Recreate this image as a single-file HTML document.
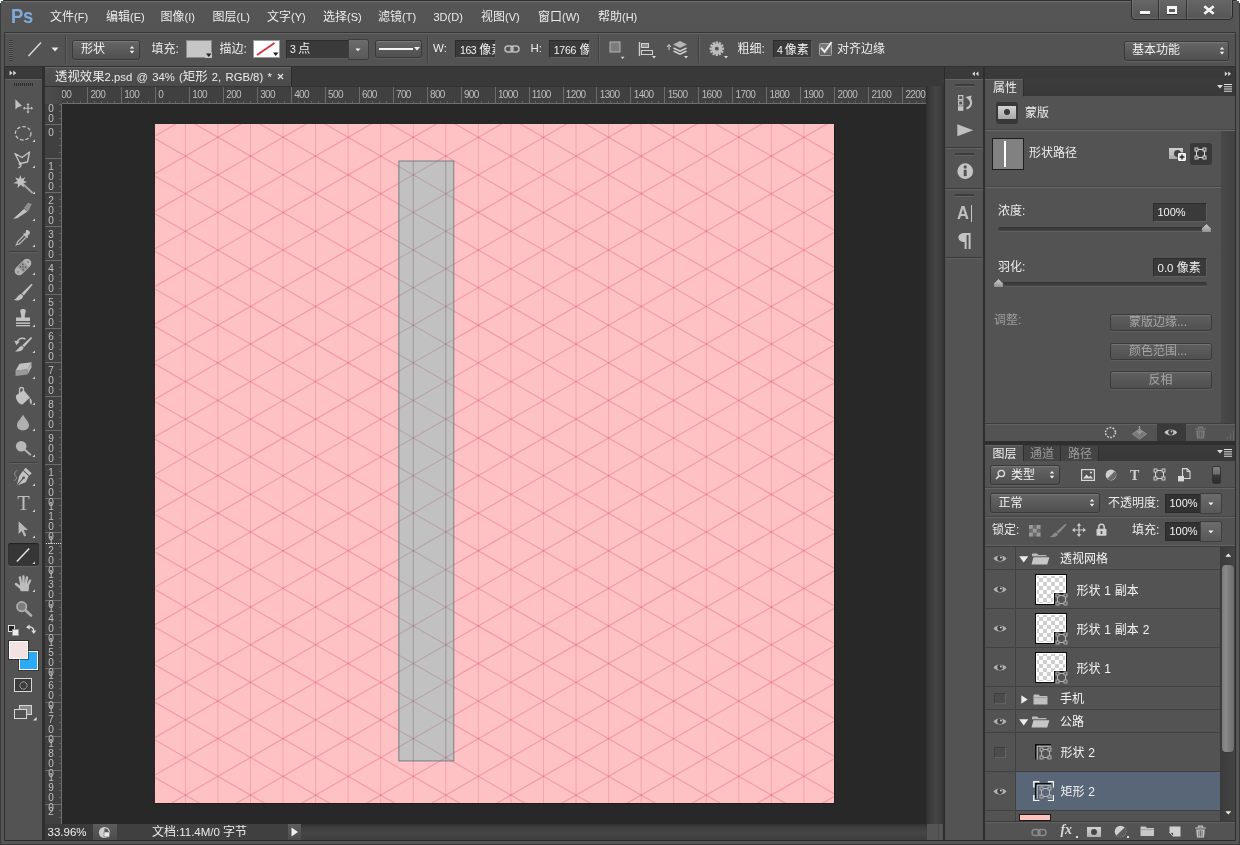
<!DOCTYPE html>
<html lang="zh-CN"><head><meta charset="utf-8"><title>Photoshop</title>
<style>
html,body{margin:0;padding:0}
body{width:1240px;height:845px;overflow:hidden;background:#535353;position:relative;font-family:"Liberation Sans","Noto Sans CJK SC",sans-serif;}
#app{position:absolute;left:0;top:0;width:1240px;height:845px;overflow:hidden;will-change:transform}
#app div,#app svg{position:absolute}
#app .t{display:flex;white-space:pre;align-items:flex-start}
#app .t b{position:relative;display:block;overflow:visible;color:inherit;font-weight:normal;flex:none;font-size:12px;font-family:"Liberation Sans","Noto Sans CJK SC",sans-serif}
#app .t span{position:relative;display:block;flex:none}
#app .l{white-space:pre}
.btn{border:1px solid #383838;border-radius:2.5px;background:linear-gradient(#666,#4f4f4f);box-sizing:border-box;box-shadow:inset 0 1px 0 rgba(255,255,255,.13),0 1px 0 rgba(255,255,255,.08)}
.fld{background:#3a3a3a;box-sizing:border-box;border:1px solid #2c2c2c;border-right-color:#5e5e5e;border-bottom-color:#5e5e5e}
</style></head>
<body>
<div id="app">
<div style="left:0px;top:0px;width:1240px;height:32px;background:linear-gradient(#5c5c5c 0px,#565656 3px,#535353 100%);"></div>
<div style="left:0px;top:0px;width:1240px;height:1px;background:#2f2f2f;"></div>
<div style="left:0px;top:1px;width:1240px;height:1px;background:#707070;"></div>
<div class="l" style="left:10.5px;top:3.5px;font-size:20.5px;line-height:22.5px;color:#7fa9da;font-weight:bold;letter-spacing:-0.3px;line-height:23px;transform:scaleX(.9);transform-origin:0 0">Ps</div>
<div class="t" style="left:50px;top:10.5px;height:12px;line-height:12px;font-size:11px;color:#ececec;fill:#ececec;"><b style="width:24px;height:12px;font-size:12px">文件</b><span style="top:0px">(F)</span></div>
<div class="t" style="left:106px;top:10.5px;height:12px;line-height:12px;font-size:11px;color:#ececec;fill:#ececec;"><b style="width:24px;height:12px;font-size:12px">编辑</b><span style="top:0px">(E)</span></div>
<div class="t" style="left:160.5px;top:10.5px;height:12px;line-height:12px;font-size:11px;color:#ececec;fill:#ececec;"><b style="width:24px;height:12px;font-size:12px">图像</b><span style="top:0px">(I)</span></div>
<div class="t" style="left:212.5px;top:10.5px;height:12px;line-height:12px;font-size:11px;color:#ececec;fill:#ececec;"><b style="width:24px;height:12px;font-size:12px">图层</b><span style="top:0px">(L)</span></div>
<div class="t" style="left:267px;top:10.5px;height:12px;line-height:12px;font-size:11px;color:#ececec;fill:#ececec;"><b style="width:24px;height:12px;font-size:12px">文字</b><span style="top:0px">(Y)</span></div>
<div class="t" style="left:323px;top:10.5px;height:12px;line-height:12px;font-size:11px;color:#ececec;fill:#ececec;"><b style="width:24px;height:12px;font-size:12px">选择</b><span style="top:0px">(S)</span></div>
<div class="t" style="left:378px;top:10.5px;height:12px;line-height:12px;font-size:11px;color:#ececec;fill:#ececec;"><b style="width:24px;height:12px;font-size:12px">滤镜</b><span style="top:0px">(T)</span></div>
<div class="t" style="left:433.5px;top:10.5px;height:12px;line-height:12px;font-size:11px;color:#ececec;fill:#ececec;"><span style="top:0px">3D(D)</span></div>
<div class="t" style="left:481px;top:10.5px;height:12px;line-height:12px;font-size:11px;color:#ececec;fill:#ececec;"><b style="width:24px;height:12px;font-size:12px">视图</b><span style="top:0px">(V)</span></div>
<div class="t" style="left:538px;top:10.5px;height:12px;line-height:12px;font-size:11px;color:#ececec;fill:#ececec;"><b style="width:24px;height:12px;font-size:12px">窗口</b><span style="top:0px">(W)</span></div>
<div class="t" style="left:598px;top:10.5px;height:12px;line-height:12px;font-size:11px;color:#ececec;fill:#ececec;"><b style="width:24px;height:12px;font-size:12px">帮助</b><span style="top:0px">(H)</span></div>
<div style="left:1130.5px;top:-3px;width:102px;height:22.8px;background:linear-gradient(#686868,#555);border:1px solid #2b2b2b;border-radius:0 0 4px 4px;box-sizing:border-box;box-shadow:inset 0 0 0 1px rgba(255,255,255,.10)"></div>
<div style="left:1158px;top:0px;width:1px;height:19px;background:#333;"></div>
<div style="left:1159px;top:0px;width:1px;height:19px;background:rgba(255,255,255,.10);"></div>
<div style="left:1185.5px;top:0px;width:1px;height:19px;background:#333;"></div>
<div style="left:1186.5px;top:0px;width:1px;height:19px;background:rgba(255,255,255,.10);"></div>
<div style="left:1140px;top:11px;width:10px;height:3px;background:#f4f4f4;box-shadow:0 1px 0 #333"></div>
<div style="left:1167px;top:6px;width:10px;height:8px;box-sizing:border-box;border:2px solid #f4f4f4;border-top-width:3px;box-shadow:0 1px 0 #333"></div><svg style="left:1202px;top:5px;" width="14" height="10" viewBox="0 0 14 10"><path d="M2.3 1.3 L11.7 8.7 M11.7 1.3 L2.3 8.7" stroke="#f4f4f4" stroke-width="2.7" fill="none"/></svg><div style="left:0px;top:32px;width:1240px;height:34px;background:#535353;"></div>
<div style="left:0px;top:32px;width:1240px;height:1px;background:#343434;"></div>
<div style="left:0px;top:33px;width:1240px;height:1px;background:#666;"></div>
<div style="left:0px;top:66px;width:1240px;height:1px;background:#303030;"></div>
<div style="left:4px;top:33px;width:1px;height:34px;background:#343434;"></div>
<div style="left:9px;top:40px;width:4px;height:21px;background:repeating-linear-gradient(#3a3a3a 0 1px,#626262 1px 2px);"></div><svg style="left:26px;top:40px;" width="18" height="18" viewBox="0 0 18 18"><path d="M2.5 16 L15 2.5" stroke="#dcdcdc" stroke-width="1.4" fill="none"/></svg><svg style="left:51px;top:47px;" width="8" height="5" viewBox="0 0 8 5"><path d="M0.5 0.5 H7.5 L4 4.5 Z" fill="#e8e8e8"/></svg><div style="left:65px;top:36px;width:1px;height:27px;background:#404040;"></div>
<div style="left:66px;top:36px;width:1px;height:27px;background:#606060;"></div>
<div class="btn" style="left:72px;top:39.5px;width:67.5px;height:20px;"></div>
<div class="t" style="left:81px;top:42.5px;height:12px;line-height:12px;font-size:11px;color:#f0f0f0;fill:#f0f0f0;"><b style="width:24px;height:12px;font-size:12px">形状</b></div><svg style="left:129.2px;top:45.3px;" width="6" height="9.4" viewBox="0 0 8 12"><path d="M1 4.5 L4 1 L7 4.5 Z M1 7.5 L4 11 L7 7.5 Z" fill="#f0f0f0"/></svg><div class="t" style="left:151.5px;top:42.5px;height:12px;line-height:12px;font-size:12px;color:#ececec;fill:#ececec;"><b style="width:30px;height:12px;font-size:12px">填充:</b></div>
<div style="left:186px;top:40px;width:26px;height:18px;background:#c6c6c6;box-sizing:border-box;border:1px solid #8a8a8a"></div><svg style="left:205px;top:52px;" width="7" height="6" viewBox="0 0 7 6"><rect width="7" height="6" fill="#c6c6c6"/><path d="M1 1.5 H6.5 L3.75 5 Z" fill="#222"/></svg><div class="t" style="left:219.5px;top:42.5px;height:12px;line-height:12px;font-size:12px;color:#ececec;fill:#ececec;"><b style="width:30px;height:12px;font-size:12px">描边:</b></div>
<div style="left:253px;top:40px;width:27px;height:18px;background:#fff;box-sizing:border-box;border:1px solid #999"></div><svg style="left:254px;top:41px;" width="25" height="16" viewBox="0 0 25 16"><path d="M3 14 L20.5 2" stroke="#d6343f" stroke-width="1.9"/><path d="M19 11.5 H24.5 L21.75 15 Z" fill="#222"/></svg><div class="fld" style="left:286px;top:39.5px;width:63px;height:19px;"></div>
<div class="t" style="left:290px;top:42.5px;height:12px;line-height:12px;font-size:10.5px;color:#f4f4f4;fill:#f4f4f4;word-spacing:-.6px"><span style="top:0px">3 </span><b style="width:12px;height:12px;font-size:12px">点</b></div>
<div style="left:348.5px;top:40px;width:19px;height:18.5px;background:linear-gradient(#6c6c6c,#585858);border-radius:0 2px 2px 0;box-shadow:0 0 0 1px #3e3e3e"></div><svg style="left:355px;top:47.5px;" width="5.8" height="3.8" viewBox="0 0 8 5"><path d="M0.5 0.5 H7.5 L4 4.5 Z" fill="#f4f4f4"/></svg><div class="btn" style="left:375px;top:39.5px;width:46.5px;height:18.5px;"></div>
<div style="left:379px;top:47.5px;width:34px;height:2px;background:#f4f4f4;"></div><svg style="left:413.5px;top:47px;" width="6" height="4" viewBox="0 0 6 4"><path d="M0 0 H6 L3 3.5 Z" fill="#eee"/></svg><div style="left:427px;top:36px;width:1px;height:27px;background:#404040;"></div>
<div style="left:428px;top:36px;width:1px;height:27px;background:#606060;"></div>
<div class="l" style="left:433px;top:42px;font-size:11.5px;line-height:13.5px;color:#ececec;">W:</div>
<div class="fld" style="left:455px;top:40px;width:40.5px;height:18px;overflow:hidden"><div class="t" style="left:4px;top:2.5px;height:12px;line-height:12px;font-size:10.5px;color:#f4f4f4;fill:#f4f4f4;letter-spacing:-.45px;word-spacing:.6px"><span style="top:0px">163 </span><b style="width:24px;height:12px;font-size:12px;letter-spacing:0">像素</b></div></div><svg style="left:504px;top:44px;" width="16" height="10" viewBox="0 0 16 10"><rect x="1" y="2" width="8" height="6" rx="3" fill="none" stroke="#bdbdbd" stroke-width="1.5"/><rect x="7" y="2" width="8" height="6" rx="3" fill="none" stroke="#bdbdbd" stroke-width="1.5"/></svg><div class="l" style="left:530.5px;top:42px;font-size:11.5px;line-height:13.5px;color:#ececec;">H:</div>
<div class="fld" style="left:549px;top:40px;width:40.5px;height:18px;overflow:hidden"><div class="t" style="left:3.7px;top:2.5px;height:12px;line-height:12px;font-size:10.5px;color:#f4f4f4;fill:#f4f4f4;letter-spacing:-.2px;word-spacing:.6px"><span style="top:0px">1766 </span><b style="width:24px;height:12px;font-size:12px;letter-spacing:0">像素</b></div></div>
<div style="left:598px;top:36px;width:1px;height:27px;background:#404040;"></div>
<div style="left:599px;top:36px;width:1px;height:27px;background:#606060;"></div><svg style="left:608px;top:41px;" width="18" height="19" viewBox="0 0 18 19"><rect x="2" y="1" width="10" height="10" fill="#7c7c7c" stroke="#b4b4b4"/><path d="M12.8 15.8 H16.4 L14.6 18Z" fill="#ddd"/></svg><svg style="left:638px;top:41px;" width="20" height="19" viewBox="0 0 20 19"><path d="M1.5 1 V15" stroke="#d0d0d0" stroke-width="1.4"/><rect x="3.5" y="2.5" width="7" height="4" fill="#8e8e8e" stroke="#d0d0d0"/><rect x="3.5" y="9.5" width="11" height="4" fill="none" stroke="#d0d0d0"/><path d="M14 15 H18 L16 17.5Z" fill="#ddd"/></svg><svg style="left:666px;top:40px;" width="24" height="20" viewBox="0 0 24 20"><path d="M3 10 V5 M1 7 L3 4.5 L5 7" stroke="#d0d0d0" fill="none"/><path d="M14 1 L21 4.5 L14 8 L7 4.5Z" fill="#b5b5b5"/><path d="M7.5 8 L14 11.2 L20.5 8 M7.5 11 L14 14.2 L20.5 11" stroke="#cfcfcf" stroke-width="1.6" fill="none"/><path d="M18 16 H22 L20 18.5Z" fill="#ddd"/></svg><div style="left:698px;top:36px;width:1px;height:27px;background:#404040;"></div>
<div style="left:699px;top:36px;width:1px;height:27px;background:#606060;"></div><svg style="left:708px;top:40px;" width="22" height="20" viewBox="0 0 22 20"><g transform="translate(8.8,8.7)" fill="#bcbcbc"><rect x="-1.15" y="-7.3" width="2.3" height="3.4" transform="rotate(0)"/><rect x="-1.15" y="-7.3" width="2.3" height="3.4" transform="rotate(30)"/><rect x="-1.15" y="-7.3" width="2.3" height="3.4" transform="rotate(60)"/><rect x="-1.15" y="-7.3" width="2.3" height="3.4" transform="rotate(90)"/><rect x="-1.15" y="-7.3" width="2.3" height="3.4" transform="rotate(120)"/><rect x="-1.15" y="-7.3" width="2.3" height="3.4" transform="rotate(150)"/><rect x="-1.15" y="-7.3" width="2.3" height="3.4" transform="rotate(180)"/><rect x="-1.15" y="-7.3" width="2.3" height="3.4" transform="rotate(210)"/><rect x="-1.15" y="-7.3" width="2.3" height="3.4" transform="rotate(240)"/><rect x="-1.15" y="-7.3" width="2.3" height="3.4" transform="rotate(270)"/><rect x="-1.15" y="-7.3" width="2.3" height="3.4" transform="rotate(300)"/><rect x="-1.15" y="-7.3" width="2.3" height="3.4" transform="rotate(330)"/><circle r="5.2"/><circle r="1.9" fill="#535353"/></g><path d="M16 16 H20 L18 18.5Z" fill="#ddd"/></svg><div class="t" style="left:737.5px;top:42.5px;height:12px;line-height:12px;font-size:12px;color:#ececec;fill:#ececec;"><b style="width:30px;height:12px;font-size:12px">粗细:</b></div>
<div class="fld" style="left:772.5px;top:40px;width:39.5px;height:18px;"><div class="t" style="left:3.5px;top:2.5px;height:12px;line-height:12px;font-size:10.5px;color:#f4f4f4;fill:#f4f4f4;word-spacing:-.9px"><span style="top:0px">4 </span><b style="width:24px;height:12px;font-size:12px">像素</b></div></div>
<div style="left:818.5px;top:42.5px;width:13px;height:13px;background:linear-gradient(#7c7c7c,#626262);box-sizing:border-box;border:1px solid #a6a6a6;border-radius:1.5px"></div><svg style="left:818px;top:39px;" width="16" height="16" viewBox="0 0 16 16"><path d="M3 8.6 L6.6 12.8 L13.6 3.2" stroke="#ececec" stroke-width="2" fill="none"/></svg><div class="t" style="left:837px;top:42.5px;height:12px;line-height:12px;font-size:11px;color:#ececec;fill:#ececec;"><b style="width:48px;height:12px;font-size:12px">对齐边缘</b></div>
<div class="btn" style="left:1123.5px;top:40.5px;width:105px;height:20px;"></div>
<div class="t" style="left:1132px;top:44px;height:12px;line-height:12px;font-size:11px;color:#f0f0f0;fill:#f0f0f0;"><b style="width:48px;height:12px;font-size:12px">基本功能</b></div><svg style="left:1218.7px;top:46.3px;" width="6" height="9.4" viewBox="0 0 8 12"><path d="M1 4.5 L4 1 L7 4.5 Z M1 7.5 L4 11 L7 7.5 Z" fill="#f0f0f0"/></svg><div style="left:4px;top:67px;width:1px;height:773px;background:#2e2e2e;"></div>
<div style="left:5px;top:67px;width:37px;height:12px;background:#3a3a3a;"></div>
<div style="left:5px;top:79px;width:37px;height:761px;background:#535353;"></div>
<div style="left:5px;top:79px;width:37px;height:1px;background:#636363;"></div>
<div style="left:42px;top:67px;width:3px;height:773px;background:#2f2f2f;"></div><svg style="left:8.5px;top:70px;" width="8" height="6" viewBox="0 0 9 7"><path d="M0.5 0.5 L4 3.5 L0.5 6.5Z M4.8 0.5 L8.3 3.5 L4.8 6.5Z" fill="#d8d8d8"/></svg><div style="left:14px;top:83px;width:19px;height:3px;background:repeating-linear-gradient(90deg,#2e2e2e 0 1px,#535353 1px 2px);"></div><svg style="left:12.5px;top:97px;overflow:visible" width="20" height="20" viewBox="0 0 20 20"><path d="M2.4 2.2 V12.6 L5.2 10 L9 9Z" fill="#c2c2c2"/><g stroke="#c2c2c2" stroke-width="1.1" fill="none"><path d="M15 7.5 V15 M11.2 11.2 H18.8"/></g><path d="M15 6 L13.4 8.1 H16.6Z M15 16.6 L13.4 14.5 H16.6Z M9.8 11.2 L11.9 9.6 V12.8Z M20.2 11.2 L18.1 9.6 V12.8Z" fill="#c2c2c2"/></svg><svg style="left:12.5px;top:124px;overflow:visible" width="20" height="20" viewBox="0 0 20 20"><ellipse cx="10.2" cy="9.3" rx="7.8" ry="6.7" fill="none" stroke="#c2c2c2" stroke-width="1.3" stroke-dasharray="3.6 1.9"/></svg><svg style="left:32px;top:139px;" width="3.4" height="3.4" viewBox="0 0 3.4 3.4"><path d="M3.4 0 V3.4 H0Z" fill="#d4d4d4"/></svg><svg style="left:12.5px;top:149.5px;overflow:visible" width="20" height="20" viewBox="0 0 20 20"><path d="M2 3.5 L9 7.5 L16.5 2 L14.5 12 L7 13.5 Z" fill="none" stroke="#c2c2c2" stroke-width="1.4" stroke-linejoin="round"/><path d="M7 13.5 C9 15 8 17 5 18" fill="none" stroke="#c2c2c2" stroke-width="1.3"/><circle cx="7.2" cy="13.8" r="1.6" fill="#c2c2c2"/></svg><svg style="left:32px;top:164.5px;" width="3.4" height="3.4" viewBox="0 0 3.4 3.4"><path d="M3.4 0 V3.4 H0Z" fill="#d4d4d4"/></svg><svg style="left:12.5px;top:176px;overflow:visible" width="20" height="20" viewBox="0 0 20 20"><path d="M10.5 8.5 L19 16.5" stroke="#a4a4a4" stroke-width="2" stroke-linecap="round"/><path d="M7.5 -1 L8.6 3 L12.5 1 L10.4 4.8 L14 6 L10.2 7.4 L11 11.5 L7.6 8.8 L4.6 12 L5 7.8 L0.5 7.2 L4.4 5 L2.2 1.4 L6 2.8Z" fill="#c2c2c2"/></svg><svg style="left:32px;top:191px;" width="3.4" height="3.4" viewBox="0 0 3.4 3.4"><path d="M3.4 0 V3.4 H0Z" fill="#d4d4d4"/></svg><svg style="left:12.5px;top:202.5px;overflow:visible" width="20" height="20" viewBox="0 0 20 20"><g transform="translate(-0.8,-1.3)"><path d="M1 17 L12 7 L15 10 L5 16.5 Z" fill="#c2c2c2"/><path d="M12.3 6.3 L16 1.5 L19 2.5 L15.6 9.5Z" fill="#8c8c8c" stroke="#aaa" stroke-width=".6"/></g></svg><svg style="left:32px;top:217.5px;" width="3.4" height="3.4" viewBox="0 0 3.4 3.4"><path d="M3.4 0 V3.4 H0Z" fill="#d4d4d4"/></svg><svg style="left:12.5px;top:228.5px;overflow:visible" width="20" height="20" viewBox="0 0 20 20"><g transform="translate(1.2,0.2) scale(.9)"><path d="M13.2 1.2 C15 -0.3 18.8 3 17 5.2 L14.6 7.6 L15.6 8.6 L14.2 10 L9.8 5.6 L11.2 4.2 L12.2 5.2Z" fill="#c2c2c2"/><path d="M10.6 7.2 L3.6 14.2 L3 16.8 L1.6 18.2 M12.8 9.4 L5.8 16.4 L3.2 17" fill="none" stroke="#c2c2c2" stroke-width="1.3"/></g></svg><svg style="left:32px;top:243.5px;" width="3.4" height="3.4" viewBox="0 0 3.4 3.4"><path d="M3.4 0 V3.4 H0Z" fill="#d4d4d4"/></svg><svg style="left:12.5px;top:256.5px;overflow:visible" width="20" height="20" viewBox="0 0 20 20"><g transform="rotate(-45 10 10)"><rect x="0" y="5.6" width="20" height="8.8" rx="4.4" fill="#b2b2b2"/><rect x="6.3" y="5.6" width="7.4" height="8.8" fill="#989898"/><g fill="#5a5a5a"><circle cx="8.2" cy="8" r=".8"/><circle cx="11.8" cy="8" r=".8"/><circle cx="8.2" cy="12" r=".8"/><circle cx="11.8" cy="12" r=".8"/><circle cx="10" cy="10" r=".8"/><circle cx="3" cy="10" r=".7"/><circle cx="17" cy="10" r=".7"/></g></g></svg><svg style="left:32px;top:271.5px;" width="3.4" height="3.4" viewBox="0 0 3.4 3.4"><path d="M3.4 0 V3.4 H0Z" fill="#d4d4d4"/></svg><svg style="left:12.5px;top:282.5px;overflow:visible" width="20" height="20" viewBox="0 0 20 20"><path d="M18.5 0.8 L19.6 1.8 L10.8 12.4 L8.6 10.4Z" fill="#c2c2c2"/><path d="M8 11 L10.2 13 C9.5 17 4.5 18.3 0.8 17 C3.8 16 4.6 12 8 11Z" fill="#c2c2c2"/></svg><svg style="left:32px;top:297.5px;" width="3.4" height="3.4" viewBox="0 0 3.4 3.4"><path d="M3.4 0 V3.4 H0Z" fill="#d4d4d4"/></svg><svg style="left:12.5px;top:309px;overflow:visible" width="20" height="20" viewBox="0 0 20 20"><path d="M7.2 1.5 C7.2 -0.5 12.8 -0.5 12.8 1.5 C12.8 4 11.5 5.5 11.8 8.6 H17 V12 H3 V8.6 H8.2 C8.5 5.5 7.2 4 7.2 1.5Z" fill="#c2c2c2"/><rect x="3" y="13.4" width="14" height="1.5" fill="#c2c2c2"/><rect x="3" y="16" width="14" height="1.3" fill="#c2c2c2"/></svg><svg style="left:32px;top:324px;" width="3.4" height="3.4" viewBox="0 0 3.4 3.4"><path d="M3.4 0 V3.4 H0Z" fill="#d4d4d4"/></svg><svg style="left:12.5px;top:334.5px;overflow:visible" width="20" height="20" viewBox="0 0 20 20"><path d="M18 2 L19.2 3 L11.3 12 L9.3 10.2Z" fill="#c2c2c2"/><path d="M8.7 10.8 L10.7 12.6 C10 16 5.5 17.3 2 16.2 C5 15.2 5.6 11.8 8.7 10.8Z" fill="#c2c2c2"/><path d="M4 7.5 C5 3.5 9.5 2 12.5 4.2" fill="none" stroke="#c2c2c2" stroke-width="1.5"/><path d="M1.3 5.8 L6.6 6.6 L3.5 10.2Z" fill="#c2c2c2"/></svg><svg style="left:32px;top:349.5px;" width="3.4" height="3.4" viewBox="0 0 3.4 3.4"><path d="M3.4 0 V3.4 H0Z" fill="#d4d4d4"/></svg><svg style="left:12.5px;top:360.5px;overflow:visible" width="20" height="20" viewBox="0 0 20 20"><g transform="translate(0,-1.2)"><path d="M6.5 4 L18.5 2.5 L14.5 9.5 L2.5 11Z" fill="#c2c2c2"/><path d="M2.5 11 L14.5 9.5 V14.8 L2.5 16.3Z" fill="#9a9a9a"/><path d="M14.5 9.5 L18.5 2.5 V7.8 L14.5 14.8Z" fill="#b4b4b4"/></g></svg><svg style="left:32px;top:375.5px;" width="3.4" height="3.4" viewBox="0 0 3.4 3.4"><path d="M3.4 0 V3.4 H0Z" fill="#d4d4d4"/></svg><svg style="left:12.5px;top:386.5px;overflow:visible" width="20" height="20" viewBox="0 0 20 20"><path d="M3 8.5 L10.5 3 L17 10.5 L9.5 17.5 C7 18.5 2 12.5 3 8.5Z" fill="#c2c2c2"/><path d="M6.5 7 V2.6 C6.5 -0.2 10.5 -0.2 10.5 2.6 V6.5" fill="none" stroke="#c2c2c2" stroke-width="1.3"/><path d="M16.8 10.8 C19.3 12.8 19.3 15.6 18.2 17.8 C16.6 16 16.4 13.4 16.8 10.8Z" fill="#c2c2c2"/></svg><svg style="left:32px;top:401.5px;" width="3.4" height="3.4" viewBox="0 0 3.4 3.4"><path d="M3.4 0 V3.4 H0Z" fill="#d4d4d4"/></svg><svg style="left:12.5px;top:412.5px;overflow:visible" width="20" height="20" viewBox="0 0 20 20"><path d="M10 1.6 C11.8 5.6 16 8.6 16 12.2 C16 15.3 13.4 17.4 10 17.4 C6.6 17.4 4 15.3 4 12.2 C4 8.6 8.2 5.6 10 1.6Z" fill="#b0b0b0"/></svg><svg style="left:32px;top:427.5px;" width="3.4" height="3.4" viewBox="0 0 3.4 3.4"><path d="M3.4 0 V3.4 H0Z" fill="#d4d4d4"/></svg><svg style="left:12.5px;top:438.5px;overflow:visible" width="20" height="20" viewBox="0 0 20 20"><circle cx="8.2" cy="7.3" r="5.3" fill="#b8b8b8"/><path d="M11.5 10.5 L17.3 15.6" stroke="#b8b8b8" stroke-width="1.9" stroke-linecap="round"/></svg><svg style="left:32px;top:453.5px;" width="3.4" height="3.4" viewBox="0 0 3.4 3.4"><path d="M3.4 0 V3.4 H0Z" fill="#d4d4d4"/></svg><svg style="left:12.5px;top:467.5px;overflow:visible" width="20" height="20" viewBox="0 0 20 20"><g transform="translate(-0.3,-1)"><path d="M13 0.8 L19 6.2 L16.8 8.4 L10.8 3Z" fill="#c2c2c2"/><path d="M10.2 3.8 L16 9 L13 15.2 L4 18.8 L6.5 9.2Z" fill="#c2c2c2"/><path d="M4.2 18.6 L10.4 11.4" stroke="#535353" stroke-width="1.1"/><circle cx="10.9" cy="10.8" r="1.4" fill="#535353"/><path d="M4.5 3.5 C1.5 4.5 1.5 8 3.2 9.5 C4.8 11 3.2 13.6 1 13.2" fill="none" stroke="#9a9a9a" stroke-width="1"/></g></svg><svg style="left:32px;top:482.5px;" width="3.4" height="3.4" viewBox="0 0 3.4 3.4"><path d="M3.4 0 V3.4 H0Z" fill="#d4d4d4"/></svg><svg style="left:12.5px;top:493.5px;overflow:visible" width="20" height="20" viewBox="0 0 20 20"><text x="10.4" y="16.4" text-anchor="middle" font-family="Liberation Serif,serif" font-size="20.5" fill="#bcbcbc">T</text></svg><svg style="left:32px;top:508.5px;" width="3.4" height="3.4" viewBox="0 0 3.4 3.4"><path d="M3.4 0 V3.4 H0Z" fill="#d4d4d4"/></svg><svg style="left:12.5px;top:519.5px;overflow:visible" width="20" height="20" viewBox="0 0 20 20"><path d="M5.6 1.2 V14 L8.6 11 L11.2 16.5 L13.3 15.5 L10.7 10.1 L15 9.9Z" fill="#b8b8b8"/></svg><svg style="left:32px;top:534.5px;" width="3.4" height="3.4" viewBox="0 0 3.4 3.4"><path d="M3.4 0 V3.4 H0Z" fill="#d4d4d4"/></svg><div style="left:8px;top:542.5px;width:31px;height:23px;background:#363636;border-radius:3px;box-shadow:inset 0 1px 1px #222, 0 1px 0 #636363"></div><svg style="left:12.5px;top:545.5px;overflow:visible" width="20" height="20" viewBox="0 0 20 20"><path d="M3.9 15.6 L16.2 2.6" stroke="#e4e4e4" stroke-width="1.5"/></svg><svg style="left:32px;top:560.5px;" width="3.4" height="3.4" viewBox="0 0 3.4 3.4"><path d="M3.4 0 V3.4 H0Z" fill="#d4d4d4"/></svg><svg style="left:12.5px;top:574px;overflow:visible" width="20" height="20" viewBox="0 0 20 20"><g stroke="#bdbdbd" stroke-linecap="round" fill="none"><path d="M8.3 10 L6.9 3.4 M10.6 10 L10.4 2.5 M12.9 10 L14 3.4" stroke-width="2.4"/><path d="M15 11 L17.1 6.5" stroke-width="2.2"/><path d="M8.2 14.2 L3 10" stroke-width="2.5"/></g><path d="M7 9.4 H16.2 L15.6 17.2 H7.6 L6.6 13Z" fill="#bdbdbd"/></svg><svg style="left:32px;top:589px;" width="3.4" height="3.4" viewBox="0 0 3.4 3.4"><path d="M3.4 0 V3.4 H0Z" fill="#d4d4d4"/></svg><svg style="left:12.5px;top:600px;overflow:visible" width="20" height="20" viewBox="0 0 20 20"><circle cx="8.7" cy="6.6" r="4.7" fill="#7c7c7c" stroke="#b0b0b0" stroke-width="1.7"/><path d="M12.7 10.5 L18 15.5" stroke="#b0b0b0" stroke-width="2.6" stroke-linecap="round"/></svg><div style="left:9px;top:250.5px;width:29px;height:1px;background:#3e3e3e;"></div>
<div style="left:9px;top:251.5px;width:29px;height:1px;background:#606060;"></div>
<div style="left:9px;top:462px;width:29px;height:1px;background:#3e3e3e;"></div>
<div style="left:9px;top:463px;width:29px;height:1px;background:#606060;"></div>
<div style="left:8px;top:625px;width:7px;height:7px;background:#222;border:1px solid #ddd;box-sizing:border-box"></div>
<div style="left:11.5px;top:628.5px;width:7px;height:7px;background:#eee;border:1px solid #999;box-sizing:border-box"></div><svg style="left:25px;top:623px;" width="12" height="12" viewBox="0 0 12 12"><path d="M3 4.5 C6 3 9 5 8.8 8.2" fill="none" stroke="#ddd" stroke-width="1.3"/><path d="M1 4.2 L4.6 1.6 L4.8 6.4Z M8.8 11 L6.2 7.6 L11.2 7.4Z" fill="#ddd"/></svg><div style="left:19px;top:651px;width:18.5px;height:18.5px;background:#2baaf7;border:1px solid #fff;box-sizing:border-box;box-shadow:0 0 0 1px rgba(0,0,0,.3)"></div>
<div style="left:8.5px;top:640.5px;width:19.5px;height:18.5px;background:#f3e2e2;border:1px solid #fff;box-sizing:border-box;box-shadow:0 0 0 1px rgba(0,0,0,.4)"></div>
<div style="left:14px;top:678px;width:17.5px;height:13.5px;background:#3c3c3c;border:1px solid #d8d8d8;box-sizing:border-box"></div><svg style="left:17.5px;top:679.5px;" width="11" height="11" viewBox="0 0 11 11"><circle cx="5.5" cy="5.5" r="3.6" fill="none" stroke="#ddd" stroke-width="1" stroke-dasharray="1.2 1"/></svg><div style="left:19px;top:705px;width:12.5px;height:10px;background:#8a8a8a;border:1px solid #d8d8d8;box-sizing:border-box"></div>
<div style="left:14px;top:709px;width:12.5px;height:10px;background:#535353;border:1px solid #d8d8d8;box-sizing:border-box"></div><svg style="left:32.5px;top:717px;" width="4" height="4" viewBox="0 0 4 4"><path d="M3.6 0 V3.6 H0Z" fill="#e0e0e0"/></svg><div style="left:45px;top:67px;width:899px;height:19px;background:#393939;"></div>
<div style="left:45px;top:67px;width:245.5px;height:19.5px;background:linear-gradient(#525252,#4a4a4a);box-shadow:inset 0 1px 0 #666, 1px 0 0 #2c2c2c"></div>
<div class="t" style="left:55px;top:70.5px;height:12.4px;line-height:12.4px;font-size:11.3px;color:#ececec;fill:#ececec;word-spacing:1.1px"><b style="width:49.6px;height:12.4px;font-size:12.4px">透视效果</b><span style="top:0.5px">2.psd @ 34% (</span><b style="width:24.8px;height:12.4px;font-size:12.4px">矩形</b><span style="top:0.5px"> 2, RGB/8) *</span></div><svg style="left:277px;top:73px;" width="7" height="7" viewBox="0 0 7 7"><path d="M1 1 L6 6 M6 1 L1 6" stroke="#e4e4e4" stroke-width="1.2"/></svg><div style="left:45px;top:86px;width:881px;height:18px;background:#404040;"></div>
<div style="left:45px;top:86px;width:881px;height:1px;background:#343434;"></div>
<div style="left:45px;top:104px;width:17px;height:720px;background:#404040;"></div>
<div style="left:62px;top:104px;width:864px;height:720px;background:#282828;"></div><svg style="left:0;top:0" width="1240" height="845"><path d="M67.5 101 V104" stroke="#606060" stroke-width="1"/><path d="M73.5 101 V104" stroke="#606060" stroke-width="1"/><path d="M80.5 101 V104" stroke="#606060" stroke-width="1"/><path d="M87.5 87 V104" stroke="#6c6c6c" stroke-width="1"/><path d="M94.5 101 V104" stroke="#606060" stroke-width="1"/><path d="M101.5 101 V104" stroke="#606060" stroke-width="1"/><path d="M107.5 101 V104" stroke="#606060" stroke-width="1"/><path d="M114.5 101 V104" stroke="#606060" stroke-width="1"/><path d="M121.5 87 V104" stroke="#6c6c6c" stroke-width="1"/><path d="M128.5 101 V104" stroke="#606060" stroke-width="1"/><path d="M135.5 101 V104" stroke="#606060" stroke-width="1"/><path d="M141.5 101 V104" stroke="#606060" stroke-width="1"/><path d="M148.5 101 V104" stroke="#606060" stroke-width="1"/><path d="M155.5 87 V104" stroke="#6c6c6c" stroke-width="1"/><path d="M162.5 101 V104" stroke="#606060" stroke-width="1"/><path d="M169.5 101 V104" stroke="#606060" stroke-width="1"/><path d="M175.5 101 V104" stroke="#606060" stroke-width="1"/><path d="M182.5 101 V104" stroke="#606060" stroke-width="1"/><path d="M189.5 87 V104" stroke="#6c6c6c" stroke-width="1"/><path d="M196.5 101 V104" stroke="#606060" stroke-width="1"/><path d="M203.5 101 V104" stroke="#606060" stroke-width="1"/><path d="M209.5 101 V104" stroke="#606060" stroke-width="1"/><path d="M216.5 101 V104" stroke="#606060" stroke-width="1"/><path d="M223.5 87 V104" stroke="#6c6c6c" stroke-width="1"/><path d="M230.5 101 V104" stroke="#606060" stroke-width="1"/><path d="M237.5 101 V104" stroke="#606060" stroke-width="1"/><path d="M243.5 101 V104" stroke="#606060" stroke-width="1"/><path d="M250.5 101 V104" stroke="#606060" stroke-width="1"/><path d="M257.5 87 V104" stroke="#6c6c6c" stroke-width="1"/><path d="M264.5 101 V104" stroke="#606060" stroke-width="1"/><path d="M270.5 101 V104" stroke="#606060" stroke-width="1"/><path d="M277.5 101 V104" stroke="#606060" stroke-width="1"/><path d="M284.5 101 V104" stroke="#606060" stroke-width="1"/><path d="M291.5 87 V104" stroke="#6c6c6c" stroke-width="1"/><path d="M298.5 101 V104" stroke="#606060" stroke-width="1"/><path d="M304.5 101 V104" stroke="#606060" stroke-width="1"/><path d="M311.5 101 V104" stroke="#606060" stroke-width="1"/><path d="M318.5 101 V104" stroke="#606060" stroke-width="1"/><path d="M325.5 87 V104" stroke="#6c6c6c" stroke-width="1"/><path d="M332.5 101 V104" stroke="#606060" stroke-width="1"/><path d="M338.5 101 V104" stroke="#606060" stroke-width="1"/><path d="M345.5 101 V104" stroke="#606060" stroke-width="1"/><path d="M352.5 101 V104" stroke="#606060" stroke-width="1"/><path d="M359.5 87 V104" stroke="#6c6c6c" stroke-width="1"/><path d="M366.5 101 V104" stroke="#606060" stroke-width="1"/><path d="M372.5 101 V104" stroke="#606060" stroke-width="1"/><path d="M379.5 101 V104" stroke="#606060" stroke-width="1"/><path d="M386.5 101 V104" stroke="#606060" stroke-width="1"/><path d="M393.5 87 V104" stroke="#6c6c6c" stroke-width="1"/><path d="M400.5 101 V104" stroke="#606060" stroke-width="1"/><path d="M406.5 101 V104" stroke="#606060" stroke-width="1"/><path d="M413.5 101 V104" stroke="#606060" stroke-width="1"/><path d="M420.5 101 V104" stroke="#606060" stroke-width="1"/><path d="M427.5 87 V104" stroke="#6c6c6c" stroke-width="1"/><path d="M433.5 101 V104" stroke="#606060" stroke-width="1"/><path d="M440.5 101 V104" stroke="#606060" stroke-width="1"/><path d="M447.5 101 V104" stroke="#606060" stroke-width="1"/><path d="M454.5 101 V104" stroke="#606060" stroke-width="1"/><path d="M461.5 87 V104" stroke="#6c6c6c" stroke-width="1"/><path d="M467.5 101 V104" stroke="#606060" stroke-width="1"/><path d="M474.5 101 V104" stroke="#606060" stroke-width="1"/><path d="M481.5 101 V104" stroke="#606060" stroke-width="1"/><path d="M488.5 101 V104" stroke="#606060" stroke-width="1"/><path d="M495.5 87 V104" stroke="#6c6c6c" stroke-width="1"/><path d="M501.5 101 V104" stroke="#606060" stroke-width="1"/><path d="M508.5 101 V104" stroke="#606060" stroke-width="1"/><path d="M515.5 101 V104" stroke="#606060" stroke-width="1"/><path d="M522.5 101 V104" stroke="#606060" stroke-width="1"/><path d="M529.5 87 V104" stroke="#6c6c6c" stroke-width="1"/><path d="M535.5 101 V104" stroke="#606060" stroke-width="1"/><path d="M542.5 101 V104" stroke="#606060" stroke-width="1"/><path d="M549.5 101 V104" stroke="#606060" stroke-width="1"/><path d="M556.5 101 V104" stroke="#606060" stroke-width="1"/><path d="M563.5 87 V104" stroke="#6c6c6c" stroke-width="1"/><path d="M569.5 101 V104" stroke="#606060" stroke-width="1"/><path d="M576.5 101 V104" stroke="#606060" stroke-width="1"/><path d="M583.5 101 V104" stroke="#606060" stroke-width="1"/><path d="M590.5 101 V104" stroke="#606060" stroke-width="1"/><path d="M596.5 87 V104" stroke="#6c6c6c" stroke-width="1"/><path d="M603.5 101 V104" stroke="#606060" stroke-width="1"/><path d="M610.5 101 V104" stroke="#606060" stroke-width="1"/><path d="M617.5 101 V104" stroke="#606060" stroke-width="1"/><path d="M624.5 101 V104" stroke="#606060" stroke-width="1"/><path d="M630.5 87 V104" stroke="#6c6c6c" stroke-width="1"/><path d="M637.5 101 V104" stroke="#606060" stroke-width="1"/><path d="M644.5 101 V104" stroke="#606060" stroke-width="1"/><path d="M651.5 101 V104" stroke="#606060" stroke-width="1"/><path d="M658.5 101 V104" stroke="#606060" stroke-width="1"/><path d="M664.5 87 V104" stroke="#6c6c6c" stroke-width="1"/><path d="M671.5 101 V104" stroke="#606060" stroke-width="1"/><path d="M678.5 101 V104" stroke="#606060" stroke-width="1"/><path d="M685.5 101 V104" stroke="#606060" stroke-width="1"/><path d="M692.5 101 V104" stroke="#606060" stroke-width="1"/><path d="M698.5 87 V104" stroke="#6c6c6c" stroke-width="1"/><path d="M705.5 101 V104" stroke="#606060" stroke-width="1"/><path d="M712.5 101 V104" stroke="#606060" stroke-width="1"/><path d="M719.5 101 V104" stroke="#606060" stroke-width="1"/><path d="M726.5 101 V104" stroke="#606060" stroke-width="1"/><path d="M732.5 87 V104" stroke="#6c6c6c" stroke-width="1"/><path d="M739.5 101 V104" stroke="#606060" stroke-width="1"/><path d="M746.5 101 V104" stroke="#606060" stroke-width="1"/><path d="M753.5 101 V104" stroke="#606060" stroke-width="1"/><path d="M759.5 101 V104" stroke="#606060" stroke-width="1"/><path d="M766.5 87 V104" stroke="#6c6c6c" stroke-width="1"/><path d="M773.5 101 V104" stroke="#606060" stroke-width="1"/><path d="M780.5 101 V104" stroke="#606060" stroke-width="1"/><path d="M787.5 101 V104" stroke="#606060" stroke-width="1"/><path d="M793.5 101 V104" stroke="#606060" stroke-width="1"/><path d="M800.5 87 V104" stroke="#6c6c6c" stroke-width="1"/><path d="M807.5 101 V104" stroke="#606060" stroke-width="1"/><path d="M814.5 101 V104" stroke="#606060" stroke-width="1"/><path d="M821.5 101 V104" stroke="#606060" stroke-width="1"/><path d="M827.5 101 V104" stroke="#606060" stroke-width="1"/><path d="M834.5 87 V104" stroke="#6c6c6c" stroke-width="1"/><path d="M841.5 101 V104" stroke="#606060" stroke-width="1"/><path d="M848.5 101 V104" stroke="#606060" stroke-width="1"/><path d="M855.5 101 V104" stroke="#606060" stroke-width="1"/><path d="M861.5 101 V104" stroke="#606060" stroke-width="1"/><path d="M868.5 87 V104" stroke="#6c6c6c" stroke-width="1"/><path d="M875.5 101 V104" stroke="#606060" stroke-width="1"/><path d="M882.5 101 V104" stroke="#606060" stroke-width="1"/><path d="M889.5 101 V104" stroke="#606060" stroke-width="1"/><path d="M895.5 101 V104" stroke="#606060" stroke-width="1"/><path d="M902.5 87 V104" stroke="#6c6c6c" stroke-width="1"/><path d="M909.5 101 V104" stroke="#606060" stroke-width="1"/><path d="M916.5 101 V104" stroke="#606060" stroke-width="1"/><path d="M922.5 101 V104" stroke="#606060" stroke-width="1"/><path d="M59 104.5 H62" stroke="#606060" stroke-width="1"/><path d="M59 111.5 H62" stroke="#606060" stroke-width="1"/><path d="M59 118.5 H62" stroke="#606060" stroke-width="1"/><path d="M45 124.5 H62" stroke="#6c6c6c" stroke-width="1"/><path d="M59 131.5 H62" stroke="#606060" stroke-width="1"/><path d="M59 138.5 H62" stroke="#606060" stroke-width="1"/><path d="M59 145.5 H62" stroke="#606060" stroke-width="1"/><path d="M59 152.5 H62" stroke="#606060" stroke-width="1"/><path d="M45 158.5 H62" stroke="#6c6c6c" stroke-width="1"/><path d="M59 165.5 H62" stroke="#606060" stroke-width="1"/><path d="M59 172.5 H62" stroke="#606060" stroke-width="1"/><path d="M59 179.5 H62" stroke="#606060" stroke-width="1"/><path d="M59 186.5 H62" stroke="#606060" stroke-width="1"/><path d="M45 192.5 H62" stroke="#6c6c6c" stroke-width="1"/><path d="M59 199.5 H62" stroke="#606060" stroke-width="1"/><path d="M59 206.5 H62" stroke="#606060" stroke-width="1"/><path d="M59 213.5 H62" stroke="#606060" stroke-width="1"/><path d="M59 220.5 H62" stroke="#606060" stroke-width="1"/><path d="M45 226.5 H62" stroke="#6c6c6c" stroke-width="1"/><path d="M59 233.5 H62" stroke="#606060" stroke-width="1"/><path d="M59 240.5 H62" stroke="#606060" stroke-width="1"/><path d="M59 247.5 H62" stroke="#606060" stroke-width="1"/><path d="M59 254.5 H62" stroke="#606060" stroke-width="1"/><path d="M45 260.5 H62" stroke="#6c6c6c" stroke-width="1"/><path d="M59 267.5 H62" stroke="#606060" stroke-width="1"/><path d="M59 274.5 H62" stroke="#606060" stroke-width="1"/><path d="M59 281.5 H62" stroke="#606060" stroke-width="1"/><path d="M59 288.5 H62" stroke="#606060" stroke-width="1"/><path d="M45 294.5 H62" stroke="#6c6c6c" stroke-width="1"/><path d="M59 301.5 H62" stroke="#606060" stroke-width="1"/><path d="M59 308.5 H62" stroke="#606060" stroke-width="1"/><path d="M59 315.5 H62" stroke="#606060" stroke-width="1"/><path d="M59 321.5 H62" stroke="#606060" stroke-width="1"/><path d="M45 328.5 H62" stroke="#6c6c6c" stroke-width="1"/><path d="M59 335.5 H62" stroke="#606060" stroke-width="1"/><path d="M59 342.5 H62" stroke="#606060" stroke-width="1"/><path d="M59 349.5 H62" stroke="#606060" stroke-width="1"/><path d="M59 355.5 H62" stroke="#606060" stroke-width="1"/><path d="M45 362.5 H62" stroke="#6c6c6c" stroke-width="1"/><path d="M59 369.5 H62" stroke="#606060" stroke-width="1"/><path d="M59 376.5 H62" stroke="#606060" stroke-width="1"/><path d="M59 383.5 H62" stroke="#606060" stroke-width="1"/><path d="M59 389.5 H62" stroke="#606060" stroke-width="1"/><path d="M45 396.5 H62" stroke="#6c6c6c" stroke-width="1"/><path d="M59 403.5 H62" stroke="#606060" stroke-width="1"/><path d="M59 410.5 H62" stroke="#606060" stroke-width="1"/><path d="M59 417.5 H62" stroke="#606060" stroke-width="1"/><path d="M59 423.5 H62" stroke="#606060" stroke-width="1"/><path d="M45 430.5 H62" stroke="#6c6c6c" stroke-width="1"/><path d="M59 437.5 H62" stroke="#606060" stroke-width="1"/><path d="M59 444.5 H62" stroke="#606060" stroke-width="1"/><path d="M59 451.5 H62" stroke="#606060" stroke-width="1"/><path d="M59 457.5 H62" stroke="#606060" stroke-width="1"/><path d="M45 464.5 H62" stroke="#6c6c6c" stroke-width="1"/><path d="M59 471.5 H62" stroke="#606060" stroke-width="1"/><path d="M59 478.5 H62" stroke="#606060" stroke-width="1"/><path d="M59 484.5 H62" stroke="#606060" stroke-width="1"/><path d="M59 491.5 H62" stroke="#606060" stroke-width="1"/><path d="M45 498.5 H62" stroke="#6c6c6c" stroke-width="1"/><path d="M59 505.5 H62" stroke="#606060" stroke-width="1"/><path d="M59 512.5 H62" stroke="#606060" stroke-width="1"/><path d="M59 518.5 H62" stroke="#606060" stroke-width="1"/><path d="M59 525.5 H62" stroke="#606060" stroke-width="1"/><path d="M45 532.5 H62" stroke="#6c6c6c" stroke-width="1"/><path d="M59 539.5 H62" stroke="#606060" stroke-width="1"/><path d="M59 546.5 H62" stroke="#606060" stroke-width="1"/><path d="M59 552.5 H62" stroke="#606060" stroke-width="1"/><path d="M59 559.5 H62" stroke="#606060" stroke-width="1"/><path d="M45 566.5 H62" stroke="#6c6c6c" stroke-width="1"/><path d="M59 573.5 H62" stroke="#606060" stroke-width="1"/><path d="M59 580.5 H62" stroke="#606060" stroke-width="1"/><path d="M59 586.5 H62" stroke="#606060" stroke-width="1"/><path d="M59 593.5 H62" stroke="#606060" stroke-width="1"/><path d="M45 600.5 H62" stroke="#6c6c6c" stroke-width="1"/><path d="M59 607.5 H62" stroke="#606060" stroke-width="1"/><path d="M59 614.5 H62" stroke="#606060" stroke-width="1"/><path d="M59 620.5 H62" stroke="#606060" stroke-width="1"/><path d="M59 627.5 H62" stroke="#606060" stroke-width="1"/><path d="M45 634.5 H62" stroke="#6c6c6c" stroke-width="1"/><path d="M59 641.5 H62" stroke="#606060" stroke-width="1"/><path d="M59 647.5 H62" stroke="#606060" stroke-width="1"/><path d="M59 654.5 H62" stroke="#606060" stroke-width="1"/><path d="M59 661.5 H62" stroke="#606060" stroke-width="1"/><path d="M45 668.5 H62" stroke="#6c6c6c" stroke-width="1"/><path d="M59 675.5 H62" stroke="#606060" stroke-width="1"/><path d="M59 681.5 H62" stroke="#606060" stroke-width="1"/><path d="M59 688.5 H62" stroke="#606060" stroke-width="1"/><path d="M59 695.5 H62" stroke="#606060" stroke-width="1"/><path d="M45 702.5 H62" stroke="#6c6c6c" stroke-width="1"/><path d="M59 709.5 H62" stroke="#606060" stroke-width="1"/><path d="M59 715.5 H62" stroke="#606060" stroke-width="1"/><path d="M59 722.5 H62" stroke="#606060" stroke-width="1"/><path d="M59 729.5 H62" stroke="#606060" stroke-width="1"/><path d="M45 736.5 H62" stroke="#6c6c6c" stroke-width="1"/><path d="M59 743.5 H62" stroke="#606060" stroke-width="1"/><path d="M59 749.5 H62" stroke="#606060" stroke-width="1"/><path d="M59 756.5 H62" stroke="#606060" stroke-width="1"/><path d="M59 763.5 H62" stroke="#606060" stroke-width="1"/><path d="M45 770.5 H62" stroke="#6c6c6c" stroke-width="1"/><path d="M59 777.5 H62" stroke="#606060" stroke-width="1"/><path d="M59 783.5 H62" stroke="#606060" stroke-width="1"/><path d="M59 790.5 H62" stroke="#606060" stroke-width="1"/><path d="M59 797.5 H62" stroke="#606060" stroke-width="1"/><path d="M45 804.5 H62" stroke="#6c6c6c" stroke-width="1"/><path d="M59 810.5 H62" stroke="#606060" stroke-width="1"/><path d="M59 817.5 H62" stroke="#606060" stroke-width="1"/></svg><div style="left:46px;top:542.5px;width:16px;height:1px;background:repeating-linear-gradient(90deg,#e6e6e6 0 1px,transparent 1px 2px);"></div>
<div style="left:62px;top:103px;width:864px;height:1px;background:#6e6e6e;"></div>
<div style="left:61px;top:104px;width:1px;height:720px;background:#6e6e6e;"></div>
<div class="l" style="left:56.42px;top:88.8px;font-size:10px;line-height:12px;color:#bebebe;letter-spacing:-0.65px">300</div>
<div class="l" style="left:90.38px;top:88.8px;font-size:10px;line-height:12px;color:#bebebe;letter-spacing:-0.65px">200</div>
<div class="l" style="left:124.34px;top:88.8px;font-size:10px;line-height:12px;color:#bebebe;letter-spacing:-0.65px">100</div>
<div class="l" style="left:158.3px;top:88.8px;font-size:10px;line-height:12px;color:#bebebe;letter-spacing:-0.65px">0</div>
<div class="l" style="left:192.26px;top:88.8px;font-size:10px;line-height:12px;color:#bebebe;letter-spacing:-0.65px">100</div>
<div class="l" style="left:226.22px;top:88.8px;font-size:10px;line-height:12px;color:#bebebe;letter-spacing:-0.65px">200</div>
<div class="l" style="left:260.18px;top:88.8px;font-size:10px;line-height:12px;color:#bebebe;letter-spacing:-0.65px">300</div>
<div class="l" style="left:294.14px;top:88.8px;font-size:10px;line-height:12px;color:#bebebe;letter-spacing:-0.65px">400</div>
<div class="l" style="left:328.1px;top:88.8px;font-size:10px;line-height:12px;color:#bebebe;letter-spacing:-0.65px">500</div>
<div class="l" style="left:362.06px;top:88.8px;font-size:10px;line-height:12px;color:#bebebe;letter-spacing:-0.65px">600</div>
<div class="l" style="left:396.02px;top:88.8px;font-size:10px;line-height:12px;color:#bebebe;letter-spacing:-0.65px">700</div>
<div class="l" style="left:429.98px;top:88.8px;font-size:10px;line-height:12px;color:#bebebe;letter-spacing:-0.65px">800</div>
<div class="l" style="left:463.94px;top:88.8px;font-size:10px;line-height:12px;color:#bebebe;letter-spacing:-0.65px">900</div>
<div class="l" style="left:497.9px;top:88.8px;font-size:10px;line-height:12px;color:#bebebe;letter-spacing:-0.65px">1000</div>
<div class="l" style="left:531.86px;top:88.8px;font-size:10px;line-height:12px;color:#bebebe;letter-spacing:-0.65px">1100</div>
<div class="l" style="left:565.82px;top:88.8px;font-size:10px;line-height:12px;color:#bebebe;letter-spacing:-0.65px">1200</div>
<div class="l" style="left:599.78px;top:88.8px;font-size:10px;line-height:12px;color:#bebebe;letter-spacing:-0.65px">1300</div>
<div class="l" style="left:633.74px;top:88.8px;font-size:10px;line-height:12px;color:#bebebe;letter-spacing:-0.65px">1400</div>
<div class="l" style="left:667.7px;top:88.8px;font-size:10px;line-height:12px;color:#bebebe;letter-spacing:-0.65px">1500</div>
<div class="l" style="left:701.66px;top:88.8px;font-size:10px;line-height:12px;color:#bebebe;letter-spacing:-0.65px">1600</div>
<div class="l" style="left:735.62px;top:88.8px;font-size:10px;line-height:12px;color:#bebebe;letter-spacing:-0.65px">1700</div>
<div class="l" style="left:769.58px;top:88.8px;font-size:10px;line-height:12px;color:#bebebe;letter-spacing:-0.65px">1800</div>
<div class="l" style="left:803.54px;top:88.8px;font-size:10px;line-height:12px;color:#bebebe;letter-spacing:-0.65px">1900</div>
<div class="l" style="left:837.5px;top:88.8px;font-size:10px;line-height:12px;color:#bebebe;letter-spacing:-0.65px">2000</div>
<div class="l" style="left:871.46px;top:88.8px;font-size:10px;line-height:12px;color:#bebebe;letter-spacing:-0.65px">2100</div>
<div class="l" style="left:905.42px;top:88.8px;font-size:10px;line-height:12px;color:#bebebe;letter-spacing:-0.65px">2200</div>
<div style="left:45px;top:87px;width:17px;height:17px;background:linear-gradient(90deg,#4e4e4e,#454545);"></div>
<div style="left:45px;top:86px;width:17px;height:1px;background:#2e2e2e;"></div>
<div class="l" style="left:47px;top:103.14px;font-size:10px;line-height:12px;color:#c0c0c0;width:8px;text-align:center">0</div>
<div class="l" style="left:47px;top:113.14px;font-size:10px;line-height:12px;color:#c0c0c0;width:8px;text-align:center">0</div>
<div class="l" style="left:47px;top:127.1px;font-size:10px;line-height:12px;color:#c0c0c0;width:8px;text-align:center">0</div>
<div class="l" style="left:47px;top:161.06px;font-size:10px;line-height:12px;color:#c0c0c0;width:8px;text-align:center">1</div>
<div class="l" style="left:47px;top:171.06px;font-size:10px;line-height:12px;color:#c0c0c0;width:8px;text-align:center">0</div>
<div class="l" style="left:47px;top:181.06px;font-size:10px;line-height:12px;color:#c0c0c0;width:8px;text-align:center">0</div>
<div class="l" style="left:47px;top:195.02px;font-size:10px;line-height:12px;color:#c0c0c0;width:8px;text-align:center">2</div>
<div class="l" style="left:47px;top:205.02px;font-size:10px;line-height:12px;color:#c0c0c0;width:8px;text-align:center">0</div>
<div class="l" style="left:47px;top:215.02px;font-size:10px;line-height:12px;color:#c0c0c0;width:8px;text-align:center">0</div>
<div class="l" style="left:47px;top:228.98px;font-size:10px;line-height:12px;color:#c0c0c0;width:8px;text-align:center">3</div>
<div class="l" style="left:47px;top:238.98px;font-size:10px;line-height:12px;color:#c0c0c0;width:8px;text-align:center">0</div>
<div class="l" style="left:47px;top:248.98px;font-size:10px;line-height:12px;color:#c0c0c0;width:8px;text-align:center">0</div>
<div class="l" style="left:47px;top:262.94px;font-size:10px;line-height:12px;color:#c0c0c0;width:8px;text-align:center">4</div>
<div class="l" style="left:47px;top:272.94px;font-size:10px;line-height:12px;color:#c0c0c0;width:8px;text-align:center">0</div>
<div class="l" style="left:47px;top:282.94px;font-size:10px;line-height:12px;color:#c0c0c0;width:8px;text-align:center">0</div>
<div class="l" style="left:47px;top:296.9px;font-size:10px;line-height:12px;color:#c0c0c0;width:8px;text-align:center">5</div>
<div class="l" style="left:47px;top:306.9px;font-size:10px;line-height:12px;color:#c0c0c0;width:8px;text-align:center">0</div>
<div class="l" style="left:47px;top:316.9px;font-size:10px;line-height:12px;color:#c0c0c0;width:8px;text-align:center">0</div>
<div class="l" style="left:47px;top:330.86px;font-size:10px;line-height:12px;color:#c0c0c0;width:8px;text-align:center">6</div>
<div class="l" style="left:47px;top:340.86px;font-size:10px;line-height:12px;color:#c0c0c0;width:8px;text-align:center">0</div>
<div class="l" style="left:47px;top:350.86px;font-size:10px;line-height:12px;color:#c0c0c0;width:8px;text-align:center">0</div>
<div class="l" style="left:47px;top:364.82px;font-size:10px;line-height:12px;color:#c0c0c0;width:8px;text-align:center">7</div>
<div class="l" style="left:47px;top:374.82px;font-size:10px;line-height:12px;color:#c0c0c0;width:8px;text-align:center">0</div>
<div class="l" style="left:47px;top:384.82px;font-size:10px;line-height:12px;color:#c0c0c0;width:8px;text-align:center">0</div>
<div class="l" style="left:47px;top:398.78px;font-size:10px;line-height:12px;color:#c0c0c0;width:8px;text-align:center">8</div>
<div class="l" style="left:47px;top:408.78px;font-size:10px;line-height:12px;color:#c0c0c0;width:8px;text-align:center">0</div>
<div class="l" style="left:47px;top:418.78px;font-size:10px;line-height:12px;color:#c0c0c0;width:8px;text-align:center">0</div>
<div class="l" style="left:47px;top:432.74px;font-size:10px;line-height:12px;color:#c0c0c0;width:8px;text-align:center">9</div>
<div class="l" style="left:47px;top:442.74px;font-size:10px;line-height:12px;color:#c0c0c0;width:8px;text-align:center">0</div>
<div class="l" style="left:47px;top:452.74px;font-size:10px;line-height:12px;color:#c0c0c0;width:8px;text-align:center">0</div>
<div class="l" style="left:47px;top:466.7px;font-size:10px;line-height:12px;color:#c0c0c0;width:8px;text-align:center">1</div>
<div class="l" style="left:47px;top:476.7px;font-size:10px;line-height:12px;color:#c0c0c0;width:8px;text-align:center">0</div>
<div class="l" style="left:47px;top:486.7px;font-size:10px;line-height:12px;color:#c0c0c0;width:8px;text-align:center">0</div>
<div class="l" style="left:47px;top:496.7px;font-size:10px;line-height:12px;color:#c0c0c0;width:8px;text-align:center">0</div>
<div class="l" style="left:47px;top:500.66px;font-size:10px;line-height:12px;color:#c0c0c0;width:8px;text-align:center">1</div>
<div class="l" style="left:47px;top:510.66px;font-size:10px;line-height:12px;color:#c0c0c0;width:8px;text-align:center">1</div>
<div class="l" style="left:47px;top:520.66px;font-size:10px;line-height:12px;color:#c0c0c0;width:8px;text-align:center">0</div>
<div class="l" style="left:47px;top:530.66px;font-size:10px;line-height:12px;color:#c0c0c0;width:8px;text-align:center">0</div>
<div class="l" style="left:47px;top:534.62px;font-size:10px;line-height:12px;color:#c0c0c0;width:8px;text-align:center">1</div>
<div class="l" style="left:47px;top:544.62px;font-size:10px;line-height:12px;color:#c0c0c0;width:8px;text-align:center">2</div>
<div class="l" style="left:47px;top:554.62px;font-size:10px;line-height:12px;color:#c0c0c0;width:8px;text-align:center">0</div>
<div class="l" style="left:47px;top:564.62px;font-size:10px;line-height:12px;color:#c0c0c0;width:8px;text-align:center">0</div>
<div class="l" style="left:47px;top:568.58px;font-size:10px;line-height:12px;color:#c0c0c0;width:8px;text-align:center">1</div>
<div class="l" style="left:47px;top:578.58px;font-size:10px;line-height:12px;color:#c0c0c0;width:8px;text-align:center">3</div>
<div class="l" style="left:47px;top:588.58px;font-size:10px;line-height:12px;color:#c0c0c0;width:8px;text-align:center">0</div>
<div class="l" style="left:47px;top:598.58px;font-size:10px;line-height:12px;color:#c0c0c0;width:8px;text-align:center">0</div>
<div class="l" style="left:47px;top:602.54px;font-size:10px;line-height:12px;color:#c0c0c0;width:8px;text-align:center">1</div>
<div class="l" style="left:47px;top:612.54px;font-size:10px;line-height:12px;color:#c0c0c0;width:8px;text-align:center">4</div>
<div class="l" style="left:47px;top:622.54px;font-size:10px;line-height:12px;color:#c0c0c0;width:8px;text-align:center">0</div>
<div class="l" style="left:47px;top:632.54px;font-size:10px;line-height:12px;color:#c0c0c0;width:8px;text-align:center">0</div>
<div class="l" style="left:47px;top:636.5px;font-size:10px;line-height:12px;color:#c0c0c0;width:8px;text-align:center">1</div>
<div class="l" style="left:47px;top:646.5px;font-size:10px;line-height:12px;color:#c0c0c0;width:8px;text-align:center">5</div>
<div class="l" style="left:47px;top:656.5px;font-size:10px;line-height:12px;color:#c0c0c0;width:8px;text-align:center">0</div>
<div class="l" style="left:47px;top:666.5px;font-size:10px;line-height:12px;color:#c0c0c0;width:8px;text-align:center">0</div>
<div class="l" style="left:47px;top:670.46px;font-size:10px;line-height:12px;color:#c0c0c0;width:8px;text-align:center">1</div>
<div class="l" style="left:47px;top:680.46px;font-size:10px;line-height:12px;color:#c0c0c0;width:8px;text-align:center">6</div>
<div class="l" style="left:47px;top:690.46px;font-size:10px;line-height:12px;color:#c0c0c0;width:8px;text-align:center">0</div>
<div class="l" style="left:47px;top:700.46px;font-size:10px;line-height:12px;color:#c0c0c0;width:8px;text-align:center">0</div>
<div class="l" style="left:47px;top:704.42px;font-size:10px;line-height:12px;color:#c0c0c0;width:8px;text-align:center">1</div>
<div class="l" style="left:47px;top:714.42px;font-size:10px;line-height:12px;color:#c0c0c0;width:8px;text-align:center">7</div>
<div class="l" style="left:47px;top:724.42px;font-size:10px;line-height:12px;color:#c0c0c0;width:8px;text-align:center">0</div>
<div class="l" style="left:47px;top:734.42px;font-size:10px;line-height:12px;color:#c0c0c0;width:8px;text-align:center">0</div>
<div class="l" style="left:47px;top:738.38px;font-size:10px;line-height:12px;color:#c0c0c0;width:8px;text-align:center">1</div>
<div class="l" style="left:47px;top:748.38px;font-size:10px;line-height:12px;color:#c0c0c0;width:8px;text-align:center">8</div>
<div class="l" style="left:47px;top:758.38px;font-size:10px;line-height:12px;color:#c0c0c0;width:8px;text-align:center">0</div>
<div class="l" style="left:47px;top:768.38px;font-size:10px;line-height:12px;color:#c0c0c0;width:8px;text-align:center">0</div>
<div class="l" style="left:47px;top:772.34px;font-size:10px;line-height:12px;color:#c0c0c0;width:8px;text-align:center">1</div>
<div class="l" style="left:47px;top:782.34px;font-size:10px;line-height:12px;color:#c0c0c0;width:8px;text-align:center">9</div>
<div class="l" style="left:47px;top:792.34px;font-size:10px;line-height:12px;color:#c0c0c0;width:8px;text-align:center">0</div>
<div class="l" style="left:47px;top:802.34px;font-size:10px;line-height:12px;color:#c0c0c0;width:8px;text-align:center">0</div>
<div class="l" style="left:47px;top:806.3px;font-size:10px;line-height:12px;color:#c0c0c0;width:8px;text-align:center">2</div>
<div style="left:155.8px;top:125.2px;width:679.2px;height:679.2px;background:#1c1c1c;"></div><svg style="left:154.8px;top:124.2px;background:#fec1c4" width="679.2" height="679.2" viewBox="0 0 679.2 679.2"><style>.v{stroke:#c83048;stroke-opacity:.19;stroke-width:1;fill:none}.d{stroke:#d0304a;stroke-opacity:.255;stroke-width:1.15;fill:none}.v2{stroke:#604048;stroke-opacity:.33;stroke-width:1;fill:none}.d2{stroke:#a05068;stroke-opacity:.25;stroke-width:1.15;fill:none}</style><clipPath id="rc"><rect x="243.50" y="36.65" width="55.50" height="600.50"/></clipPath><path d="M30.40 0 V679.2" class="v"/><path d="M62.95 0 V679.2" class="v"/><path d="M95.51 0 V679.2" class="v"/><path d="M128.06 0 V679.2" class="v"/><path d="M160.61 0 V679.2" class="v"/><path d="M193.16 0 V679.2" class="v"/><path d="M225.72 0 V679.2" class="v"/><path d="M258.27 0 V679.2" class="v"/><path d="M290.82 0 V679.2" class="v"/><path d="M323.38 0 V679.2" class="v"/><path d="M355.93 0 V679.2" class="v"/><path d="M388.48 0 V679.2" class="v"/><path d="M421.04 0 V679.2" class="v"/><path d="M453.59 0 V679.2" class="v"/><path d="M486.14 0 V679.2" class="v"/><path d="M518.69 0 V679.2" class="v"/><path d="M551.25 0 V679.2" class="v"/><path d="M583.80 0 V679.2" class="v"/><path d="M616.35 0 V679.2" class="v"/><path d="M648.91 0 V679.2" class="v"/><path d="M0 -361.34 L679.2 30.80" class="d"/><path d="M0 -323.75 L679.2 68.38" class="d"/><path d="M0 -286.16 L679.2 105.97" class="d"/><path d="M0 -248.57 L679.2 143.56" class="d"/><path d="M0 -210.99 L679.2 181.15" class="d"/><path d="M0 -173.40 L679.2 218.74" class="d"/><path d="M0 -135.81 L679.2 256.33" class="d"/><path d="M0 -98.22 L679.2 293.92" class="d"/><path d="M0 -60.63 L679.2 331.51" class="d"/><path d="M0 -23.04 L679.2 369.10" class="d"/><path d="M0 12.06 L679.2 -380.07" class="d"/><path d="M0 14.55 L679.2 406.68" class="d"/><path d="M0 49.65 L679.2 -342.48" class="d"/><path d="M0 52.14 L679.2 444.27" class="d"/><path d="M0 87.24 L679.2 -304.90" class="d"/><path d="M0 89.73 L679.2 481.86" class="d"/><path d="M0 124.83 L679.2 -267.31" class="d"/><path d="M0 127.32 L679.2 519.45" class="d"/><path d="M0 162.42 L679.2 -229.72" class="d"/><path d="M0 164.90 L679.2 557.04" class="d"/><path d="M0 200.01 L679.2 -192.13" class="d"/><path d="M0 202.49 L679.2 594.63" class="d"/><path d="M0 237.60 L679.2 -154.54" class="d"/><path d="M0 240.08 L679.2 632.22" class="d"/><path d="M0 275.19 L679.2 -116.95" class="d"/><path d="M0 277.67 L679.2 669.81" class="d"/><path d="M0 312.77 L679.2 -79.36" class="d"/><path d="M0 315.26 L679.2 707.40" class="d"/><path d="M0 350.36 L679.2 -41.77" class="d"/><path d="M0 352.85 L679.2 744.99" class="d"/><path d="M0 387.95 L679.2 -4.18" class="d"/><path d="M0 390.44 L679.2 782.57" class="d"/><path d="M0 425.54 L679.2 33.40" class="d"/><path d="M0 428.03 L679.2 820.16" class="d"/><path d="M0 463.13 L679.2 70.99" class="d"/><path d="M0 465.62 L679.2 857.75" class="d"/><path d="M0 500.72 L679.2 108.58" class="d"/><path d="M0 503.21 L679.2 895.34" class="d"/><path d="M0 538.31 L679.2 146.17" class="d"/><path d="M0 540.79 L679.2 932.93" class="d"/><path d="M0 575.90 L679.2 183.76" class="d"/><path d="M0 578.38 L679.2 970.52" class="d"/><path d="M0 613.49 L679.2 221.35" class="d"/><path d="M0 615.97 L679.2 1008.11" class="d"/><path d="M0 651.07 L679.2 258.94" class="d"/><path d="M0 653.56 L679.2 1045.70" class="d"/><path d="M0 688.66 L679.2 296.53" class="d"/><path d="M0 726.25 L679.2 334.12" class="d"/><path d="M0 763.84 L679.2 371.71" class="d"/><path d="M0 801.43 L679.2 409.29" class="d"/><path d="M0 839.02 L679.2 446.88" class="d"/><path d="M0 876.61 L679.2 484.47" class="d"/><path d="M0 914.20 L679.2 522.06" class="d"/><path d="M0 951.79 L679.2 559.65" class="d"/><path d="M0 989.38 L679.2 597.24" class="d"/><path d="M0 1026.96 L679.2 634.83" class="d"/><path d="M0 1064.55 L679.2 672.42" class="d"/><rect x="243.50" y="36.65" width="55.50" height="600.50" fill="#c1c1c1"/><g clip-path="url(#rc)"><path d="M30.40 0 V679.2" class="v2"/><path d="M62.95 0 V679.2" class="v2"/><path d="M95.51 0 V679.2" class="v2"/><path d="M128.06 0 V679.2" class="v2"/><path d="M160.61 0 V679.2" class="v2"/><path d="M193.16 0 V679.2" class="v2"/><path d="M225.72 0 V679.2" class="v2"/><path d="M258.27 0 V679.2" class="v2"/><path d="M290.82 0 V679.2" class="v2"/><path d="M323.38 0 V679.2" class="v2"/><path d="M355.93 0 V679.2" class="v2"/><path d="M388.48 0 V679.2" class="v2"/><path d="M421.04 0 V679.2" class="v2"/><path d="M453.59 0 V679.2" class="v2"/><path d="M486.14 0 V679.2" class="v2"/><path d="M518.69 0 V679.2" class="v2"/><path d="M551.25 0 V679.2" class="v2"/><path d="M583.80 0 V679.2" class="v2"/><path d="M616.35 0 V679.2" class="v2"/><path d="M648.91 0 V679.2" class="v2"/><path d="M0 -361.34 L679.2 30.80" class="d2"/><path d="M0 -323.75 L679.2 68.38" class="d2"/><path d="M0 -286.16 L679.2 105.97" class="d2"/><path d="M0 -248.57 L679.2 143.56" class="d2"/><path d="M0 -210.99 L679.2 181.15" class="d2"/><path d="M0 -173.40 L679.2 218.74" class="d2"/><path d="M0 -135.81 L679.2 256.33" class="d2"/><path d="M0 -98.22 L679.2 293.92" class="d2"/><path d="M0 -60.63 L679.2 331.51" class="d2"/><path d="M0 -23.04 L679.2 369.10" class="d2"/><path d="M0 12.06 L679.2 -380.07" class="d2"/><path d="M0 14.55 L679.2 406.68" class="d2"/><path d="M0 49.65 L679.2 -342.48" class="d2"/><path d="M0 52.14 L679.2 444.27" class="d2"/><path d="M0 87.24 L679.2 -304.90" class="d2"/><path d="M0 89.73 L679.2 481.86" class="d2"/><path d="M0 124.83 L679.2 -267.31" class="d2"/><path d="M0 127.32 L679.2 519.45" class="d2"/><path d="M0 162.42 L679.2 -229.72" class="d2"/><path d="M0 164.90 L679.2 557.04" class="d2"/><path d="M0 200.01 L679.2 -192.13" class="d2"/><path d="M0 202.49 L679.2 594.63" class="d2"/><path d="M0 237.60 L679.2 -154.54" class="d2"/><path d="M0 240.08 L679.2 632.22" class="d2"/><path d="M0 275.19 L679.2 -116.95" class="d2"/><path d="M0 277.67 L679.2 669.81" class="d2"/><path d="M0 312.77 L679.2 -79.36" class="d2"/><path d="M0 315.26 L679.2 707.40" class="d2"/><path d="M0 350.36 L679.2 -41.77" class="d2"/><path d="M0 352.85 L679.2 744.99" class="d2"/><path d="M0 387.95 L679.2 -4.18" class="d2"/><path d="M0 390.44 L679.2 782.57" class="d2"/><path d="M0 425.54 L679.2 33.40" class="d2"/><path d="M0 428.03 L679.2 820.16" class="d2"/><path d="M0 463.13 L679.2 70.99" class="d2"/><path d="M0 465.62 L679.2 857.75" class="d2"/><path d="M0 500.72 L679.2 108.58" class="d2"/><path d="M0 503.21 L679.2 895.34" class="d2"/><path d="M0 538.31 L679.2 146.17" class="d2"/><path d="M0 540.79 L679.2 932.93" class="d2"/><path d="M0 575.90 L679.2 183.76" class="d2"/><path d="M0 578.38 L679.2 970.52" class="d2"/><path d="M0 613.49 L679.2 221.35" class="d2"/><path d="M0 615.97 L679.2 1008.11" class="d2"/><path d="M0 651.07 L679.2 258.94" class="d2"/><path d="M0 653.56 L679.2 1045.70" class="d2"/><path d="M0 688.66 L679.2 296.53" class="d2"/><path d="M0 726.25 L679.2 334.12" class="d2"/><path d="M0 763.84 L679.2 371.71" class="d2"/><path d="M0 801.43 L679.2 409.29" class="d2"/><path d="M0 839.02 L679.2 446.88" class="d2"/><path d="M0 876.61 L679.2 484.47" class="d2"/><path d="M0 914.20 L679.2 522.06" class="d2"/><path d="M0 951.79 L679.2 559.65" class="d2"/><path d="M0 989.38 L679.2 597.24" class="d2"/><path d="M0 1026.96 L679.2 634.83" class="d2"/><path d="M0 1064.55 L679.2 672.42" class="d2"/></g><rect x="243.90" y="37.05" width="54.90" height="599.90" fill="none" stroke="#767676" stroke-width="0.9"/></svg><div style="left:926px;top:86px;width:18.5px;height:738px;background:linear-gradient(90deg,#2d2d2d 0,#383838 14%,#454545 50%,#3e3e3e 78%,#2e2e2e 100%);"></div>
<div style="left:944px;top:67px;width:1.2px;height:773px;background:#2c2c2c;"></div>
<div style="left:45px;top:824px;width:899px;height:16px;background:#484848;"></div>
<div style="left:45px;top:824px;width:48px;height:16px;background:#3b3b3b;"></div>
<div class="l" style="left:47.5px;top:825.5px;font-size:11.5px;line-height:13.5px;color:#f0f0f0;">33.96%</div>
<div style="left:93px;top:824px;width:24px;height:16px;background:linear-gradient(#5c5c5c,#4c4c4c);"></div><svg style="left:98px;top:826px;" width="13" height="13" viewBox="0 0 13 13"><circle cx="6.5" cy="6.5" r="5.6" fill="#cfcfcf"/><path d="M6.5 6.5 V2.2 A4.3 4.3 0 0 1 10.8 6.5Z" fill="#555"/><rect x="6" y="6" width="5.5" height="5" fill="#e8e8e8" stroke="#666" stroke-width=".6"/></svg><div style="left:117px;top:824px;width:171px;height:16px;background:#404040;"></div>
<div class="t" style="left:152px;top:826px;height:12px;line-height:12px;font-size:11.5px;color:#ececec;fill:#ececec;"><b style="width:24px;height:12px;font-size:12px">文档</b><span style="top:0px">:11.4M/0 </span><b style="width:24px;height:12px;font-size:12px">字节</b></div>
<div style="left:288px;top:824px;width:12.5px;height:16px;background:linear-gradient(#5e5e5e,#4c4c4c);"></div><svg style="left:291px;top:827px;" width="8" height="10" viewBox="0 0 8 10"><path d="M0.5 0.5 L7 5 L0.5 9.5Z" fill="#f0f0f0"/></svg><div style="left:300.5px;top:824px;width:626px;height:16px;background:linear-gradient(#323232 0,#3e3e3e 22%,#454545 55%,#3e3e3e 100%);"></div>
<div style="left:926.5px;top:824px;width:16px;height:16px;background:#555;"></div>
<div style="left:942.5px;top:824px;width:2.5px;height:16px;background:#2d2d2d;"></div>
<div style="left:937.5px;top:824px;width:1px;height:16px;background:#4c4c4c;"></div>
<div style="left:945px;top:67px;width:291px;height:12px;background:#3a3a3a;"></div><svg style="left:971px;top:70.5px;" width="9" height="5.5" viewBox="0 0 9 7"><path d="M3.8 0.5 L0.3 3.5 L3.8 6.5Z M8.3 0.5 L4.8 3.5 L8.3 6.5Z" fill="#d8d8d8"/></svg><svg style="left:1223.5px;top:70.5px;" width="8" height="5.5" viewBox="0 0 9 7"><path d="M0.5 0.5 L4 3.5 L0.5 6.5Z M4.8 0.5 L8.3 3.5 L4.8 6.5Z" fill="#d8d8d8"/></svg><div style="left:945px;top:79px;width:37.5px;height:761px;background:#535353;"></div>
<div style="left:945px;top:79px;width:37.5px;height:1px;background:#636363;"></div>
<div style="left:982.5px;top:67px;width:2.5px;height:773px;background:#2f2f2f;"></div>
<div style="left:954.5px;top:84px;width:19.5px;height:2px;background:#3c3c3c;box-shadow:0 1px 0 #626262"></div>
<div style="left:954.5px;top:153px;width:19.5px;height:2px;background:#3c3c3c;box-shadow:0 1px 0 #626262"></div>
<div style="left:954.5px;top:194px;width:19.5px;height:2px;background:#3c3c3c;box-shadow:0 1px 0 #626262"></div>
<div style="left:945px;top:147px;width:37.5px;height:1px;background:#3a3a3a;"></div>
<div style="left:945px;top:148px;width:37.5px;height:1px;background:#626262;"></div>
<div style="left:945px;top:188px;width:37.5px;height:1px;background:#3a3a3a;"></div>
<div style="left:945px;top:189px;width:37.5px;height:1px;background:#626262;"></div>
<div style="left:945px;top:257px;width:37.5px;height:1px;background:#3a3a3a;"></div>
<div style="left:945px;top:258px;width:37.5px;height:1px;background:#626262;"></div><svg style="left:957px;top:94px;" width="20" height="18" viewBox="0 0 20 18"><g fill="none" stroke="#c4c4c4" stroke-width="1.2"><rect x="1.6" y="1.6" width="4.2" height="4"/><rect x="1.6" y="7" width="4.2" height="4"/></g><rect x="1" y="12.2" width="5.4" height="4.6" fill="#c4c4c4"/><path d="M9.5 14.5 C14.5 13 15.5 7.5 12.2 4.2" fill="none" stroke="#c4c4c4" stroke-width="2"/><path d="M8.6 3 L14.6 1.4 L13.4 7.4Z" fill="#c4c4c4"/></svg><svg style="left:957px;top:124px;" width="16.5" height="12.6" viewBox="0 0 16.5 12.6"><path d="M0.3 0.3 L16.2 6.3 L0.3 12.3Z" fill="#c0c0c0"/></svg><svg style="left:957px;top:163px;" width="16.4" height="16.4" viewBox="0 0 18 18"><circle cx="9" cy="9" r="8.6" fill="#c4c4c4"/><rect x="7.4" y="7.4" width="3.2" height="7" fill="#535353"/><circle cx="9" cy="4.4" r="1.8" fill="#535353"/></svg><div class="l" style="left:957px;top:203.2px;font-size:18px;line-height:20px;color:#c0c0c0;line-height:20px;font-weight:bold;transform:scaleX(.92);transform-origin:0 0">A</div>
<div style="left:970.5px;top:205px;width:1.5px;height:17px;background:#c4c4c4;"></div><svg style="left:958px;top:232.5px;" width="13" height="16" viewBox="0 0 13 16"><path d="M6.4 0 H12.6 V16 H10.6 V2 H8.6 V16 H6.6 V9 C-1.6 9 -1.6 0 6.4 0Z" fill="#c4c4c4"/></svg><div style="left:985px;top:79px;width:250px;height:17px;background:linear-gradient(#3c3c3c,#383838);"></div>
<div style="left:985px;top:79px;width:37.5px;height:17px;background:#535353;box-shadow:inset 0 1px 0 #666, 1px 0 0 #2e2e2e"></div>
<div class="t" style="left:993px;top:82px;height:12px;line-height:12px;font-size:11px;color:#ececec;fill:#ececec;"><b style="width:24px;height:12px;font-size:12px">属性</b></div><svg style="left:1217px;top:84px;" width="15" height="8" viewBox="0 0 15 8"><path d="M0 1 H6 L3 4.6Z" fill="#ddd"/><path d="M7 0.5 H15 M7 3 H15 M7 5.5 H15 M7 8 H15" stroke="#ddd" stroke-width="1.1" transform="scale(1,.9)"/></svg><div style="left:985px;top:96px;width:250px;height:327px;background:#535353;"></div>
<div style="left:996px;top:102px;width:22px;height:22px;background:#383838;border-radius:3px"></div>
<div style="left:998px;top:106px;width:17.5px;height:13px;background:linear-gradient(#d2d2d2,#a8a8a8);"></div>
<div style="left:1003.5px;top:109px;width:6px;height:6px;background:#3a3a3a;border-radius:3px"></div>
<div class="t" style="left:1025px;top:107px;height:12px;line-height:12px;font-size:11px;color:#ececec;fill:#ececec;"><b style="width:24px;height:12px;font-size:12px">蒙版</b></div>
<div style="left:985px;top:129px;width:250px;height:1px;background:#474747;"></div>
<div style="left:985px;top:130px;width:250px;height:1px;background:#686868;"></div>
<div style="left:1220.5px;top:131px;width:14.5px;height:292px;background:linear-gradient(90deg,#494949,#404040);"></div>
<div style="left:992px;top:138px;width:32px;height:31.5px;background:#818181;border:1px solid #1e1e1e;box-sizing:border-box"></div>
<div style="left:1004px;top:141px;width:2.2px;height:26px;background:#fff;"></div>
<div class="t" style="left:1029px;top:146.8px;height:12px;line-height:12px;font-size:11px;color:#ececec;fill:#ececec;"><b style="width:48px;height:12px;font-size:12px">形状路径</b></div>
<div style="left:1169px;top:148px;width:14px;height:11px;background:linear-gradient(#cfcfcf,#aaa);"></div>
<div style="left:1174px;top:150px;width:7px;height:7px;background:#444;border-radius:4px"></div>
<div style="left:1177.5px;top:153px;width:8px;height:8px;background:#e6e6e6;border:1px solid #fafafa;box-sizing:border-box;border-radius:1px;box-shadow:0 0 0 .6px #444"></div><svg style="left:1177.5px;top:153px;" width="8" height="8" viewBox="0 0 8 8"><path d="M4 1.6 V6.4 M1.6 4 H6.4" stroke="#222" stroke-width="1.3"/></svg><div style="left:1190px;top:143px;width:21.5px;height:21.5px;background:#393939;border-radius:3px"></div><svg style="left:1194.2px;top:147.2px;" width="13" height="13" viewBox="0 0 13 13"><rect x="2.5" y="2.5" width="8" height="8" fill="none" stroke="#dedede" stroke-width="1"/><g fill="#4a4a4a" stroke="#dedede" stroke-width=".9"><rect x="1" y="1" width="3" height="3"/><rect x="9" y="1" width="3" height="3"/><rect x="1" y="9" width="3" height="3"/><rect x="9" y="9" width="3" height="3"/></g></svg><div style="left:985px;top:185.5px;width:235.5px;height:1px;background:#474747;"></div>
<div style="left:985px;top:186.5px;width:235.5px;height:1px;background:#686868;"></div>
<div class="t" style="left:998px;top:205px;height:12px;line-height:12px;font-size:12px;color:#ececec;fill:#ececec;"><b style="width:30px;height:12px;font-size:12px">浓度:</b></div>
<div class="fld" style="left:1152.5px;top:203px;width:54.5px;height:18.5px;"><div class="l" style="left:4px;top:2.2px;font-size:11px;line-height:13px;color:#f4f4f4;">100%</div></div>
<div style="left:998px;top:226.8px;width:209px;height:4.6px;background:linear-gradient(#343434,#454545);border-radius:2.3px;box-shadow:0 1px 0 #606060"></div><svg style="left:1200.5px;top:222.5px;" width="11" height="10" viewBox="0 0 11 10"><defs><linearGradient id="tg" x1="0" y1="0" x2="0" y2="1"><stop offset="0" stop-color="#d0d0d0"/><stop offset="1" stop-color="#8e8e8e"/></linearGradient></defs><path d="M5.5 0.8 L10.3 5.2 V8.6 Q10.3 9.6 9.3 9.6 H1.7 Q0.7 9.6 0.7 8.6 V5.2Z" fill="url(#tg)" stroke="#3a3a3a" stroke-width=".6"/></svg><div class="t" style="left:998px;top:260.5px;height:12px;line-height:12px;font-size:12px;color:#ececec;fill:#ececec;"><b style="width:30px;height:12px;font-size:12px">羽化:</b></div>
<div class="fld" style="left:1152.5px;top:258px;width:54.5px;height:18.5px;"><div class="t" style="left:4px;top:2.5px;height:12px;line-height:12px;font-size:11.5px;color:#f0f0f0;fill:#f0f0f0;"><span style="top:0px">0.0 </span><b style="width:24px;height:12px;font-size:12px">像素</b></div></div>
<div style="left:998px;top:281.8px;width:209px;height:4.6px;background:linear-gradient(#343434,#454545);border-radius:2.3px;box-shadow:0 1px 0 #606060"></div><svg style="left:993px;top:277.5px;" width="11" height="10" viewBox="0 0 11 10"><defs><linearGradient id="tg" x1="0" y1="0" x2="0" y2="1"><stop offset="0" stop-color="#d0d0d0"/><stop offset="1" stop-color="#8e8e8e"/></linearGradient></defs><path d="M5.5 0.8 L10.3 5.2 V8.6 Q10.3 9.6 9.3 9.6 H1.7 Q0.7 9.6 0.7 8.6 V5.2Z" fill="url(#tg)" stroke="#3a3a3a" stroke-width=".6"/></svg><div class="t" style="left:994px;top:313.5px;height:12px;line-height:12px;font-size:12px;color:#9c9c9c;fill:#9c9c9c;"><b style="width:30px;height:12px;font-size:12px">调整:</b></div>
<div class="btn" style="left:1109.5px;top:313.5px;width:102px;height:17.5px;background:linear-gradient(#5f5f5f,#505050);border-color:#3a3a3a"></div>
<div class="t" style="left:1129px;top:316.3px;height:12px;line-height:12px;font-size:12px;color:#a6a6a6;fill:#a6a6a6;"><b style="width:48px;height:12px;font-size:12px">蒙版边缘</b><span style="top:0px">...</span></div>
<div class="btn" style="left:1109.5px;top:342.5px;width:102px;height:17.5px;background:linear-gradient(#5f5f5f,#505050);border-color:#3a3a3a"></div>
<div class="t" style="left:1129px;top:345.3px;height:12px;line-height:12px;font-size:12px;color:#a6a6a6;fill:#a6a6a6;"><b style="width:48px;height:12px;font-size:12px">颜色范围</b><span style="top:0px">...</span></div>
<div class="btn" style="left:1109.5px;top:371px;width:102px;height:17.5px;background:linear-gradient(#5f5f5f,#505050);border-color:#3a3a3a"></div>
<div class="t" style="left:1148.5px;top:373.8px;height:12px;line-height:12px;font-size:12px;color:#a6a6a6;fill:#a6a6a6;"><b style="width:24px;height:12px;font-size:12px">反相</b></div>
<div style="left:985px;top:422.5px;width:250px;height:1px;background:#3e3e3e;"></div>
<div style="left:985px;top:423.5px;width:250px;height:17.5px;background:#535353;"></div>
<div style="left:985px;top:423.5px;width:250px;height:1px;background:#626262;"></div><svg style="left:1103.5px;top:426px;" width="13" height="13" viewBox="0 0 13 13"><circle cx="6.5" cy="6.5" r="5" fill="none" stroke="#d4d4d4" stroke-width="1.5" stroke-dasharray="1.7 1.45"/></svg><svg style="left:1130.5px;top:425px;" width="17" height="15" viewBox="0 0 17 15"><path d="M8.5 4 L15.5 9 L8.5 14 L1.5 9Z" fill="#777" stroke="#8f8f8f"/><path d="M8.5 1 V8 M6 5.8 L8.5 8.6 L11 5.8" stroke="#999" fill="none" stroke-width="1.4"/></svg><div style="left:1157px;top:424px;width:28.5px;height:17px;background:#3a3a3a;"></div><svg style="left:1164.3px;top:427.8px;" width="13.6" height="8.8" viewBox="0 0 16 10"><path d="M0.6 5 C3.5 0.6 12.5 0.6 15.4 5 C12.5 9.4 3.5 9.4 0.6 5Z" fill="#c6c6c6"/><circle cx="8" cy="4.8" r="3" fill="#3a3a3a"/><circle cx="8.8" cy="4" r="1.1" fill="#c6c6c6"/></svg><svg style="left:1193.5px;top:426px;" width="13" height="13" viewBox="0 0 13 13"><path d="M1 3 H12 M4.5 3 V1.2 H8.5 V3" stroke="#7e7e7e" fill="none" stroke-width="1.2"/><path d="M2.2 4.4 H10.8 L10 12.5 H3Z" fill="#7e7e7e"/><path d="M4.8 5.5 V11.5 M6.5 5.5 V11.5 M8.2 5.5 V11.5" stroke="#535353" stroke-width=".8"/></svg><svg style="left:1224px;top:430px;" width="10" height="10" viewBox="0 0 10 10"><path d="M9.5 0.5 V9.5 M6.5 3.5 V9.5 M3.5 6.5 V9.5" stroke="#6a6a6a" stroke-width="1"/></svg><div style="left:985px;top:441px;width:250px;height:4px;background:#2f2f2f;"></div>
<div style="left:985px;top:445px;width:250px;height:16px;background:linear-gradient(#3c3c3c,#383838);"></div>
<div style="left:985px;top:445px;width:37.5px;height:16.5px;background:#535353;box-shadow:inset 0 1px 0 #666, 1px 0 0 #2e2e2e"></div>
<div class="t" style="left:992.5px;top:447.5px;height:12px;line-height:12px;font-size:11px;color:#f0f0f0;fill:#f0f0f0;"><b style="width:24px;height:12px;font-size:12px">图层</b></div>
<div style="left:1023.5px;top:446px;width:36.5px;height:15px;background:#444;box-shadow:1px 0 0 #2e2e2e"></div>
<div class="t" style="left:1030px;top:447.5px;height:12px;line-height:12px;font-size:11px;color:#9a9a9a;fill:#9a9a9a;"><b style="width:24px;height:12px;font-size:12px">通道</b></div>
<div style="left:1061px;top:446px;width:36.5px;height:15px;background:#444;box-shadow:1px 0 0 #2e2e2e"></div>
<div class="t" style="left:1068px;top:447.5px;height:12px;line-height:12px;font-size:11px;color:#9a9a9a;fill:#9a9a9a;"><b style="width:24px;height:12px;font-size:12px">路径</b></div><svg style="left:1217px;top:449px;" width="15" height="8" viewBox="0 0 15 8"><path d="M0 1 H6 L3 4.6Z" fill="#ddd"/><path d="M7 0.5 H15 M7 3 H15 M7 5.5 H15 M7 8 H15" stroke="#ddd" stroke-width="1.1" transform="scale(1,.9)"/></svg><div style="left:985px;top:461px;width:250px;height:379px;background:#535353;"></div>
<div class="btn" style="left:990px;top:465px;width:69.5px;height:19.5px;"></div><svg style="left:995px;top:469px;" width="11" height="11" viewBox="0 0 11 11"><circle cx="6.3" cy="4.5" r="3.2" fill="none" stroke="#e0e0e0" stroke-width="1.3"/><path d="M4 7 L1 10" stroke="#e0e0e0" stroke-width="1.6"/></svg><div class="t" style="left:1011px;top:468.5px;height:12px;line-height:12px;font-size:11px;color:#f4f4f4;fill:#f4f4f4;stroke:#f4f4f4;stroke-width:38"><b style="width:24px;height:12px;font-size:12px">类型</b></div><svg style="left:1049.2px;top:470.3px;" width="6" height="9.4" viewBox="0 0 8 12"><path d="M1 4.5 L4 1 L7 4.5 Z M1 7.5 L4 11 L7 7.5 Z" fill="#f0f0f0"/></svg><svg style="left:1080.5px;top:468.5px;" width="14" height="12" viewBox="0 0 14 12"><rect x=".6" y=".6" width="12.8" height="10.8" fill="none" stroke="#d8d8d8" stroke-width="1.2"/><path d="M2 9.5 L5.5 5.5 L8 8 L9.5 6.5 L12 9.5Z" fill="#d8d8d8"/><circle cx="10" cy="3.6" r="1.1" fill="#d8d8d8"/></svg><svg style="left:1104.5px;top:468.5px;" width="12" height="12" viewBox="0 0 12 12"><circle cx="6" cy="6" r="5.4" fill="#d0d0d0"/><path d="M2.2 9.8 A5.4 5.4 0 0 0 9.8 2.2Z" fill="#6a6a6a"/></svg><div class="l" style="left:1129.5px;top:466px;font-size:15.5px;line-height:17.5px;color:#d0d0d0;font-family:'Liberation Serif',serif;line-height:18px;font-weight:bold;transform:scaleX(.9);transform-origin:0 0">T</div><svg style="left:1152.5px;top:468px;" width="13" height="13" viewBox="0 0 13 13"><rect x="2.5" y="2.5" width="8" height="8" fill="none" stroke="#d8d8d8" stroke-width="1"/><g fill="#535353" stroke="#d8d8d8" stroke-width=".9"><rect x="1" y="1" width="3" height="3"/><rect x="9" y="1" width="3" height="3"/><rect x="1" y="9" width="3" height="3"/><rect x="9" y="9" width="3" height="3"/></g></svg><svg style="left:1176.5px;top:467.5px;" width="14" height="14" viewBox="0 0 14 14"><path d="M5.5 0.6 H10 L13 3.6 V10.5 H5.5Z" fill="none" stroke="#d8d8d8" stroke-width="1.1"/><path d="M10 .6 V3.6 H13" fill="none" stroke="#d8d8d8" stroke-width="1"/><rect x="1" y="8" width="6" height="5.4" fill="#d8d8d8"/></svg><div style="left:1212px;top:466px;width:8.5px;height:17.5px;background:linear-gradient(#808080 0,#6c6c6c 45%,#383838 50%,#2e2e2e);border-radius:2px;border:1px solid #333;box-sizing:border-box"></div>
<div style="left:985px;top:487px;width:250px;height:1px;background:#464646;"></div>
<div style="left:985px;top:488px;width:250px;height:1px;background:#646464;"></div>
<div class="btn" style="left:990px;top:492.5px;width:110px;height:20.5px;"></div>
<div class="t" style="left:998.5px;top:496.5px;height:12px;line-height:12px;font-size:11px;color:#f0f0f0;fill:#f0f0f0;"><b style="width:24px;height:12px;font-size:12px">正常</b></div><svg style="left:1089.2px;top:497.8px;" width="6" height="9.4" viewBox="0 0 8 12"><path d="M1 4.5 L4 1 L7 4.5 Z M1 7.5 L4 11 L7 7.5 Z" fill="#f0f0f0"/></svg><div class="t" style="left:1108px;top:496.5px;height:12px;line-height:12px;font-size:12px;color:#ececec;fill:#ececec;"><b style="width:54px;height:12px;font-size:12px">不透明度:</b></div>
<div style="left:1165px;top:494px;width:36.5px;height:18.5px;background:#323232;box-sizing:border-box;border:1px solid #2a2a2a"><div class="l" style="left:3.5px;top:2.4px;font-size:11px;line-height:13px;color:#f4f4f4;">100%</div></div>
<div style="left:1201px;top:494px;width:19.5px;height:18.5px;background:linear-gradient(#6c6c6c,#585858);border-radius:0 2px 2px 0;box-shadow:0 0 0 1px #3e3e3e"></div><svg style="left:1208px;top:501.5px;" width="5.8" height="3.8" viewBox="0 0 8 5"><path d="M0.5 0.5 H7.5 L4 4.5 Z" fill="#f4f4f4"/></svg><div style="left:985px;top:516px;width:250px;height:1px;background:#464646;"></div>
<div style="left:985px;top:517px;width:250px;height:1px;background:#646464;"></div>
<div class="t" style="left:992px;top:524px;height:12px;line-height:12px;font-size:12px;color:#ececec;fill:#ececec;"><b style="width:30px;height:12px;font-size:12px">锁定:</b></div><svg style="left:1029px;top:525px;" width="11.5" height="11.5" viewBox="0 0 11.5 11.5"><rect width="11.5" height="11.5" fill="#6a6a6a"/><g fill="#9a9a9a"><rect width="3.8" height="3.8"/><rect x="7.6" width="3.9" height="3.8"/><rect x="3.8" y="3.8" width="3.8" height="3.8"/><rect y="7.6" width="3.8" height="3.9"/><rect x="7.6" y="7.6" width="3.9" height="3.9"/></g></svg><svg style="left:1048.5px;top:522.5px;" width="18" height="15" viewBox="0 0 18 15"><path d="M16.5 0.8 L17.6 1.8 L9.6 10.4 L7.6 8.6Z" fill="#8a8a8a"/><path d="M7 9.2 L9 11 C8.5 14 4 14.8 0.8 14 C3.6 13 4 10 7 9.2Z" fill="#8a8a8a"/></svg><svg style="left:1071.5px;top:523px;" width="14" height="14" viewBox="0 0 14 14"><g stroke="#d0d0d0" stroke-width="1.2" fill="none"><path d="M7 1.5 V12.5 M1.5 7 H12.5"/></g><path d="M7 0 L4.8 2.8 H9.2Z M7 14 L4.8 11.2 H9.2Z M0 7 L2.8 4.8 V9.2Z M14 7 L11.2 4.8 V9.2Z" fill="#d0d0d0"/></svg><svg style="left:1095.5px;top:523px;" width="11" height="13" viewBox="0 0 11 13"><path d="M2.8 6 V4 C2.8 0.2 8.2 0.2 8.2 4 V6" fill="none" stroke="#d0d0d0" stroke-width="1.5"/><rect x=".5" y="5.8" width="10" height="7" rx="1" fill="#d0d0d0"/><rect x="4.7" y="8" width="1.6" height="3" fill="#555"/></svg><div class="t" style="left:1132px;top:524px;height:12px;line-height:12px;font-size:12px;color:#ececec;fill:#ececec;"><b style="width:30px;height:12px;font-size:12px">填充:</b></div>
<div style="left:1165px;top:522px;width:36.5px;height:18.5px;background:#323232;box-sizing:border-box;border:1px solid #2a2a2a"><div class="l" style="left:3.5px;top:2.4px;font-size:11px;line-height:13px;color:#f4f4f4;">100%</div></div>
<div style="left:1201px;top:522px;width:19.5px;height:18.5px;background:linear-gradient(#6c6c6c,#585858);border-radius:0 2px 2px 0;box-shadow:0 0 0 1px #3e3e3e"></div><svg style="left:1208px;top:529.5px;" width="5.8" height="3.8" viewBox="0 0 8 5"><path d="M0.5 0.5 H7.5 L4 4.5 Z" fill="#f4f4f4"/></svg><div style="left:985px;top:545px;width:250px;height:1px;background:#646464;"></div>
<div style="left:985px;top:546px;width:250px;height:1px;background:#3c3c3c;"></div>
<div style="left:985px;top:569px;width:235.5px;height:1px;background:#414141;"></div><svg style="left:993px;top:553.5px;" width="14" height="9" viewBox="0 0 16 10"><path d="M0.6 5 C3.5 0.6 12.5 0.6 15.4 5 C12.5 9.4 3.5 9.4 0.6 5Z" fill="#b4b4b4"/><circle cx="8" cy="4.8" r="3.1" fill="#404040"/><circle cx="9" cy="3.9" r="1.15" fill="#c8c8c8"/></svg><svg style="left:1019px;top:556px;" width="9.5" height="7" viewBox="0 0 9.5 7"><path d="M0.2 0.3 H9.3 L4.75 6.6Z" fill="#ececec"/></svg><svg style="left:1031px;top:553px;" width="19" height="12" viewBox="0 0 19 12"><path d="M1 3 V1.4 C1 .8 1.4 .5 2 .5 H6 L7.5 2 H14.5 C15.2 2 15.5 2.4 15.5 3Z" fill="#bdbdbd"/><path d="M0.5 11.5 L2.4 4.2 H18.4 L16.2 11.5Z" fill="#c6c6c6"/><path d="M1 3.4 H15.5" stroke="#8a8a8a" stroke-width=".7"/></svg><div class="t" style="left:1060px;top:553px;height:12px;line-height:12px;font-size:11px;color:#f4f4f4;fill:#f4f4f4;"><b style="width:48px;height:12px;font-size:12px">透视网格</b></div>
<div style="left:985px;top:608px;width:235.5px;height:1px;background:#414141;"></div><svg style="left:993px;top:584.5px;" width="14" height="9" viewBox="0 0 16 10"><path d="M0.6 5 C3.5 0.6 12.5 0.6 15.4 5 C12.5 9.4 3.5 9.4 0.6 5Z" fill="#b4b4b4"/><circle cx="8" cy="4.8" r="3.1" fill="#404040"/><circle cx="9" cy="3.9" r="1.15" fill="#c8c8c8"/></svg><svg style="left:1035px;top:573.5px;" width="32" height="31" viewBox="0 0 32 31"><defs><pattern id="ck" width="8" height="8" patternUnits="userSpaceOnUse"><rect width="8" height="8" fill="#fff"/><rect width="4" height="4" fill="#cfcfcf"/><rect x="4" y="4" width="4" height="4" fill="#cfcfcf"/></pattern></defs><path d="M0.5 0.5 H31.5 V19.5 H19.5 V30.5 H0.5Z" fill="url(#ck)" stroke="#0c0c0c" stroke-width="1.3"/><path d="M1.5 1.5 H30.5 V18.5 H18.5 V29.5 H1.5Z" fill="none" stroke="#fff" stroke-width="1"/></svg><svg style="left:1054.5px;top:592.5px;" width="13" height="13" viewBox="0 0 13 13"><rect x="2.5" y="2.5" width="8" height="8" fill="none" stroke="#b4b4b4" stroke-width="1"/><g fill="#535353" stroke="#b4b4b4" stroke-width=".9"><rect x="1" y="1" width="3" height="3"/><rect x="9" y="1" width="3" height="3"/><rect x="1" y="9" width="3" height="3"/><rect x="9" y="9" width="3" height="3"/></g></svg><div class="t" style="left:1076.5px;top:584.5px;height:12px;line-height:12px;font-size:12px;color:#f4f4f4;fill:#f4f4f4;word-spacing:.5px"><b style="width:24px;height:12px;font-size:12px">形状</b><span style="top:0px"> 1 </span><b style="width:24px;height:12px;font-size:12px">副本</b></div>
<div style="left:985px;top:647px;width:235.5px;height:1px;background:#414141;"></div><svg style="left:993px;top:623.5px;" width="14" height="9" viewBox="0 0 16 10"><path d="M0.6 5 C3.5 0.6 12.5 0.6 15.4 5 C12.5 9.4 3.5 9.4 0.6 5Z" fill="#b4b4b4"/><circle cx="8" cy="4.8" r="3.1" fill="#404040"/><circle cx="9" cy="3.9" r="1.15" fill="#c8c8c8"/></svg><svg style="left:1035px;top:612.5px;" width="32" height="31" viewBox="0 0 32 31"><defs><pattern id="ck" width="8" height="8" patternUnits="userSpaceOnUse"><rect width="8" height="8" fill="#fff"/><rect width="4" height="4" fill="#cfcfcf"/><rect x="4" y="4" width="4" height="4" fill="#cfcfcf"/></pattern></defs><path d="M0.5 0.5 H31.5 V19.5 H19.5 V30.5 H0.5Z" fill="url(#ck)" stroke="#0c0c0c" stroke-width="1.3"/><path d="M1.5 1.5 H30.5 V18.5 H18.5 V29.5 H1.5Z" fill="none" stroke="#fff" stroke-width="1"/></svg><svg style="left:1054.5px;top:631.5px;" width="13" height="13" viewBox="0 0 13 13"><rect x="2.5" y="2.5" width="8" height="8" fill="none" stroke="#b4b4b4" stroke-width="1"/><g fill="#535353" stroke="#b4b4b4" stroke-width=".9"><rect x="1" y="1" width="3" height="3"/><rect x="9" y="1" width="3" height="3"/><rect x="1" y="9" width="3" height="3"/><rect x="9" y="9" width="3" height="3"/></g></svg><div class="t" style="left:1076.5px;top:623.5px;height:12px;line-height:12px;font-size:12px;color:#f4f4f4;fill:#f4f4f4;word-spacing:.5px"><b style="width:24px;height:12px;font-size:12px">形状</b><span style="top:0px"> 1 </span><b style="width:24px;height:12px;font-size:12px">副本</b><span style="top:0px"> 2</span></div>
<div style="left:985px;top:686px;width:235.5px;height:1px;background:#414141;"></div><svg style="left:993px;top:662.5px;" width="14" height="9" viewBox="0 0 16 10"><path d="M0.6 5 C3.5 0.6 12.5 0.6 15.4 5 C12.5 9.4 3.5 9.4 0.6 5Z" fill="#b4b4b4"/><circle cx="8" cy="4.8" r="3.1" fill="#404040"/><circle cx="9" cy="3.9" r="1.15" fill="#c8c8c8"/></svg><svg style="left:1035px;top:651.5px;" width="32" height="31" viewBox="0 0 32 31"><defs><pattern id="ck" width="8" height="8" patternUnits="userSpaceOnUse"><rect width="8" height="8" fill="#fff"/><rect width="4" height="4" fill="#cfcfcf"/><rect x="4" y="4" width="4" height="4" fill="#cfcfcf"/></pattern></defs><path d="M0.5 0.5 H31.5 V19.5 H19.5 V30.5 H0.5Z" fill="url(#ck)" stroke="#0c0c0c" stroke-width="1.3"/><path d="M1.5 1.5 H30.5 V18.5 H18.5 V29.5 H1.5Z" fill="none" stroke="#fff" stroke-width="1"/></svg><svg style="left:1054.5px;top:670.5px;" width="13" height="13" viewBox="0 0 13 13"><rect x="2.5" y="2.5" width="8" height="8" fill="none" stroke="#b4b4b4" stroke-width="1"/><g fill="#535353" stroke="#b4b4b4" stroke-width=".9"><rect x="1" y="1" width="3" height="3"/><rect x="9" y="1" width="3" height="3"/><rect x="1" y="9" width="3" height="3"/><rect x="9" y="9" width="3" height="3"/></g></svg><div class="t" style="left:1076.5px;top:662.5px;height:12px;line-height:12px;font-size:12px;color:#f4f4f4;fill:#f4f4f4;word-spacing:.5px"><b style="width:24px;height:12px;font-size:12px">形状</b><span style="top:0px"> 1</span></div>
<div style="left:985px;top:709px;width:235.5px;height:1px;background:#414141;"></div>
<div style="left:994px;top:692.5px;width:11.5px;height:11.5px;background:#4c4c4c;box-sizing:border-box;border:1px solid #626262;border-top-color:#3e3e3e;border-left-color:#3e3e3e"></div><svg style="left:1020.5px;top:694.5px;" width="7" height="9" viewBox="0 0 7 9"><path d="M0.3 0.2 L6.7 4.5 L0.3 8.8Z" fill="#ececec"/></svg><svg style="left:1033px;top:693.5px;" width="15" height="11" viewBox="0 0 15 11"><path d="M.5 1.6 C.5 1 .9 .5 1.5 .5 H5.5 L7 2 H13.5 C14.1 2 14.5 2.4 14.5 3 V10.5 H.5Z" fill="#c0c0c0"/><path d="M.5 3.6 H14.5" stroke="#8f8f8f" stroke-width=".7"/></svg><div class="t" style="left:1060px;top:693px;height:12px;line-height:12px;font-size:11px;color:#f4f4f4;fill:#f4f4f4;"><b style="width:24px;height:12px;font-size:12px">手机</b></div>
<div style="left:985px;top:732px;width:235.5px;height:1px;background:#414141;"></div><svg style="left:993px;top:716.5px;" width="14" height="9" viewBox="0 0 16 10"><path d="M0.6 5 C3.5 0.6 12.5 0.6 15.4 5 C12.5 9.4 3.5 9.4 0.6 5Z" fill="#b4b4b4"/><circle cx="8" cy="4.8" r="3.1" fill="#404040"/><circle cx="9" cy="3.9" r="1.15" fill="#c8c8c8"/></svg><svg style="left:1019px;top:719px;" width="9.5" height="7" viewBox="0 0 9.5 7"><path d="M0.2 0.3 H9.3 L4.75 6.6Z" fill="#ececec"/></svg><svg style="left:1031px;top:716px;" width="19" height="12" viewBox="0 0 19 12"><path d="M1 3 V1.4 C1 .8 1.4 .5 2 .5 H6 L7.5 2 H14.5 C15.2 2 15.5 2.4 15.5 3Z" fill="#bdbdbd"/><path d="M0.5 11.5 L2.4 4.2 H18.4 L16.2 11.5Z" fill="#c6c6c6"/><path d="M1 3.4 H15.5" stroke="#8a8a8a" stroke-width=".7"/></svg><div class="t" style="left:1060px;top:716px;height:12px;line-height:12px;font-size:11px;color:#f4f4f4;fill:#f4f4f4;"><b style="width:24px;height:12px;font-size:12px">公路</b></div>
<div style="left:985px;top:771px;width:235.5px;height:1px;background:#414141;"></div>
<div style="left:994px;top:746.5px;width:11.5px;height:11.5px;background:#4c4c4c;box-sizing:border-box;border:1px solid #626262;border-top-color:#3e3e3e;border-left-color:#3e3e3e"></div><svg style="left:1035.2px;top:744px;" width="16.5" height="16" viewBox="0 0 16.5 16"><path d="M0.8 15.6 V0.8 H16" fill="none" stroke="#0e0e0e" stroke-width="1.6"/><path d="M2.2 15.6 V2.2 H16" fill="none" stroke="#d8d8d8" stroke-width=".9"/></svg><div style="left:1038.6px;top:747.2px;width:13px;height:12.4px;background:#535353;"></div><svg style="left:1038.7px;top:747px;" width="13" height="13" viewBox="0 0 13 13"><rect x="2.5" y="2.5" width="8" height="8" fill="none" stroke="#b8b8b8" stroke-width="1"/><g fill="#535353" stroke="#b8b8b8" stroke-width=".9"><rect x="1" y="1" width="3" height="3"/><rect x="9" y="1" width="3" height="3"/><rect x="1" y="9" width="3" height="3"/><rect x="9" y="9" width="3" height="3"/></g></svg><div class="t" style="left:1060.5px;top:747.2px;height:12px;line-height:12px;font-size:12px;color:#f4f4f4;fill:#f4f4f4;word-spacing:.5px"><b style="width:24px;height:12px;font-size:12px">形状</b><span style="top:0px"> 2</span></div>
<div style="left:1015.5px;top:772px;width:205px;height:38px;background:#596678;"></div>
<div style="left:985px;top:810px;width:235.5px;height:1px;background:#414141;"></div><svg style="left:993px;top:786.5px;" width="14" height="9" viewBox="0 0 16 10"><path d="M0.6 5 C3.5 0.6 12.5 0.6 15.4 5 C12.5 9.4 3.5 9.4 0.6 5Z" fill="#b4b4b4"/><circle cx="8" cy="4.8" r="3.1" fill="#404040"/><circle cx="9" cy="3.9" r="1.15" fill="#c8c8c8"/></svg><svg style="left:1032.7px;top:780.6px;" width="21.4" height="20.6" viewBox="0 0 21.4 20.6"><path d="M0.8 6.5 V0.8 H6.5 M14.9 0.8 H20.6 V6.5 M20.6 14.1 V19.8 H14.9 M6.5 19.8 H0.8 V14.1" fill="none" stroke="#f4f4f4" stroke-width="1.5"/></svg><svg style="left:1035.2px;top:783px;" width="16.5" height="16" viewBox="0 0 16.5 16"><path d="M0.8 15.6 V0.8 H16" fill="none" stroke="#0e0e0e" stroke-width="1.6"/><path d="M2.2 15.6 V2.2 H16" fill="none" stroke="#d8d8d8" stroke-width=".9"/></svg><div style="left:1038.6px;top:786.2px;width:13px;height:12.4px;background:#596678;"></div><svg style="left:1038.7px;top:786px;" width="13" height="13" viewBox="0 0 13 13"><rect x="2.5" y="2.5" width="8" height="8" fill="none" stroke="#b8b8b8" stroke-width="1"/><g fill="#596678" stroke="#b8b8b8" stroke-width=".9"><rect x="1" y="1" width="3" height="3"/><rect x="9" y="1" width="3" height="3"/><rect x="1" y="9" width="3" height="3"/><rect x="9" y="9" width="3" height="3"/></g></svg><div class="t" style="left:1060.5px;top:786.2px;height:12px;line-height:12px;font-size:12px;color:#f4f4f4;fill:#f4f4f4;word-spacing:.5px"><b style="width:24px;height:12px;font-size:12px">矩形</b><span style="top:0px"> 2</span></div>
<div style="left:1019px;top:813.7px;width:32.3px;height:7.3px;background:#ffc0c0;border:1px solid #1c1c1c;box-sizing:border-box"></div>
<div style="left:1015px;top:547px;width:1px;height:275px;background:#414141;"></div>
<div style="left:1220.5px;top:547px;width:14.5px;height:274px;background:linear-gradient(90deg,#3c3c3c,#444);"></div>
<div style="left:1220px;top:546px;width:0.8px;height:277px;background:#3a3a3a;"></div><svg style="left:1224.6px;top:553.2px;" width="6.6" height="3.9" viewBox="0 0 8 5"><path d="M0.3 4.7 L4 0.5 L7.7 4.7Z" fill="#eee"/></svg><svg style="left:1224.8px;top:811.4px;" width="6.6" height="3.9" viewBox="0 0 8 5"><path d="M0.3 0.3 L4 4.5 L7.7 0.3Z" fill="#eee"/></svg><div style="left:1221.8px;top:565.2px;width:12.4px;height:187.3px;background:linear-gradient(90deg,#7a7a7a 0,#8a8a8a 30%,#6c6c6c 100%);border-radius:4px;box-shadow:0 0 0 .5px #3a3a3a"></div>
<div style="left:985px;top:821px;width:250px;height:1px;background:#3a3a3a;"></div>
<div style="left:985px;top:822px;width:250px;height:18px;background:#535353;"></div>
<div style="left:985px;top:822px;width:250px;height:1px;background:#626262;"></div><svg style="left:1031px;top:827.5px;" width="16" height="9" viewBox="0 0 16 9"><rect x="1" y="1.5" width="8" height="6" rx="3" fill="none" stroke="#8a8a8a" stroke-width="1.5"/><rect x="7" y="1.5" width="8" height="6" rx="3" fill="none" stroke="#8a8a8a" stroke-width="1.5"/></svg><div class="l" style="left:1060.5px;top:822.3px;font-size:14px;line-height:16px;color:#d8d8d8;font-style:italic;font-weight:bold;font-family:'Liberation Serif',serif;letter-spacing:-.2px">fx</div>
<div style="left:1075.5px;top:835.5px;width:2px;height:2px;background:#ddd;"></div>
<div style="left:1087px;top:826.7px;width:13.5px;height:10.5px;background:linear-gradient(#d4d4d4,#aeaeae);"></div>
<div style="left:1091px;top:829px;width:5.6px;height:5.6px;background:#444;border-radius:3px"></div><svg style="left:1113.5px;top:825px;" width="15" height="14" viewBox="0 0 15 14"><circle cx="6.5" cy="6.5" r="5.8" fill="#d0d0d0"/><path d="M2.4 10.6 A5.8 5.8 0 0 0 10.6 2.4Z" fill="#5c5c5c"/><rect x="13" y="11" width="2" height="2" fill="#ddd"/></svg><svg style="left:1139.5px;top:825.5px;" width="14" height="10.5" viewBox="0 0 14 10.5"><path d="M.5 1.6 C.5 1 .9 .5 1.5 .5 H5.5 L7 2 H13.5 C14.1 2 14.5 2.4 14.5 3 V10.5 H.5Z" fill="#c8c8c8"/><path d="M.5 3.6 H14.5" stroke="#8f8f8f" stroke-width=".7"/></svg><svg style="left:1168.5px;top:826px;" width="12" height="11" viewBox="0 0 12 11"><path d="M.5 .5 H11.5 V10.5 H4.5 L.5 6.5Z" fill="#d0d0d0"/><path d="M.5 6.5 H4.5 V10.5Z" fill="#535353" stroke="#d0d0d0" stroke-width=".8"/></svg><svg style="left:1193.5px;top:825px;" width="13" height="13" viewBox="0 0 13 13"><path d="M1 3 H12 M4.5 3 V1.2 H8.5 V3" stroke="#c4c4c4" fill="none" stroke-width="1.2"/><path d="M2.2 4.4 H10.8 L10 12.5 H3Z" fill="#c4c4c4"/><path d="M4.8 5.5 V11.5 M6.5 5.5 V11.5 M8.2 5.5 V11.5" stroke="#535353" stroke-width=".8"/></svg><div style="left:0px;top:840px;width:1240px;height:5px;background:#555;"></div>
<div style="left:4px;top:840px;width:1232px;height:1.2px;background:#2c2c2c;"></div>
<div style="left:0px;top:844px;width:1240px;height:1px;background:#363636;"></div>
<div style="left:1235px;top:67px;width:1px;height:773px;background:#2c2c2c;"></div>
<div style="left:1235px;top:33px;width:1px;height:34px;background:#343434;"></div>
<div style="left:1236px;top:0px;width:4px;height:844px;background:#565656;"></div>
<div style="left:1239px;top:0px;width:1px;height:845px;background:#3a3a3a;"></div>
<div style="left:0px;top:0px;width:4px;height:844px;background:#565656;"></div>
<div style="left:0px;top:0px;width:1px;height:845px;background:#3a3a3a;"></div><svg style="left:0px;top:0px;" width="4" height="4" viewBox="0 0 4 4"><path d="M0 0 H3 V1 H1 V3 H0Z" fill="#fff"/></svg><svg style="left:1236px;top:0px;" width="4" height="4" viewBox="0 0 4 4"><path d="M4 0 H1 V1 H3 V3 H4Z" fill="#fff"/></svg>
</div>
</body></html>
